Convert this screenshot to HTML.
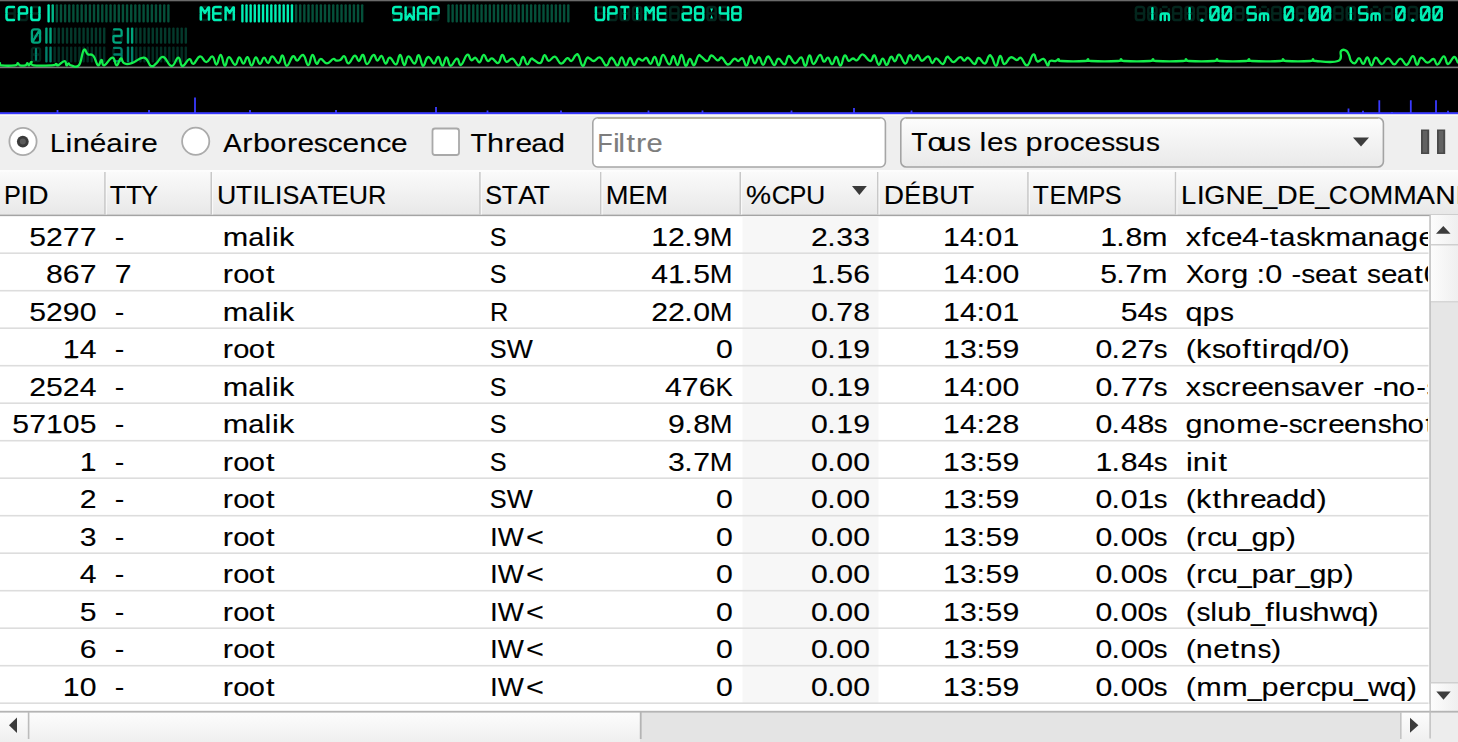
<!DOCTYPE html>
<html><head><meta charset="utf-8"><style>
html,body{margin:0;padding:0;}
body{width:1458px;height:742px;overflow:hidden;background:#efefef;position:relative;font-family:"Liberation Sans",sans-serif;}
svg{position:absolute;left:0;top:0;}
text{font-family:"Liberation Sans",sans-serif;}
</style></head><body>
<svg width="1458" height="742" viewBox="0 0 1458 742">
<rect x="0" y="114" width="1458" height="57" fill="#efefef"/><rect x="0" y="114" width="1458" height="2" fill="#fbfaf2"/><circle cx="23" cy="141.5" r="13.6" fill="#fff" stroke="#ababab" stroke-width="1.8"/><circle cx="22.8" cy="141.6" r="5.9" fill="#3a3a3a"/><circle cx="22.8" cy="141.6" r="3" fill="#5a5a5a"/><g font-size="26.60" fill="#000" stroke="#000" stroke-width="0.12"><text transform="scale(1.016,1)" x="49.3" y="152.0">L</text><text transform="scale(1.150,1)" x="56.9" y="152.0">i</text><text transform="scale(1.150,1)" x="63.2" y="152.0">n</text><text transform="scale(1.122,1)" x="79.9" y="152.0">é</text><text transform="scale(1.118,1)" x="95.1" y="152.0">a</text><text transform="scale(1.150,1)" x="107.1" y="152.0">i</text><text transform="scale(1.150,1)" x="113.8" y="152.0">r</text><text transform="scale(1.122,1)" x="126.0" y="152.0">e</text></g>
<circle cx="195.7" cy="141.3" r="13.6" fill="#fff" stroke="#ababab" stroke-width="1.8"/><g font-size="26.60" fill="#000" stroke="#000" stroke-width="0.12"><text transform="scale(1.041,1)" x="214.5" y="152.0">A</text><text transform="scale(1.150,1)" x="210.6" y="152.0">r</text><text transform="scale(1.150,1)" x="220.0" y="152.0">b</text><text transform="scale(1.117,1)" x="241.7" y="152.0">o</text><text transform="scale(1.150,1)" x="249.6" y="152.0">r</text><text transform="scale(1.123,1)" x="264.9" y="152.0">e</text><text transform="scale(1.058,1)" x="296.5" y="152.0">s</text><text transform="scale(1.117,1)" x="293.5" y="152.0">c</text><text transform="scale(1.123,1)" x="305.0" y="152.0">e</text><text transform="scale(1.150,1)" x="312.4" y="152.0">n</text><text transform="scale(1.117,1)" x="337.1" y="152.0">c</text><text transform="scale(1.123,1)" x="348.2" y="152.0">e</text></g>
<rect x="432.5" y="128.5" width="26.5" height="26.5" rx="2.5" fill="#fff" stroke="#a9a9a9" stroke-width="1.8"/><g font-size="26.60" fill="#000" stroke="#000" stroke-width="0.12"><text transform="scale(1.016,1)" x="463.0" y="152.0">T</text><text transform="scale(1.150,1)" x="423.5" y="152.0">h</text><text transform="scale(1.150,1)" x="438.8" y="152.0">r</text><text transform="scale(1.125,1)" x="458.2" y="152.0">e</text><text transform="scale(1.120,1)" x="474.4" y="152.0">a</text><text transform="scale(1.150,1)" x="476.5" y="152.0">d</text></g>
<rect x="592.8" y="117.8" width="292.6" height="49.2" rx="5" fill="#fff" stroke="#a6a6a6" stroke-width="1.6"/><path d="M597.8 118.2 H880.4" stroke="#b9b39e" stroke-width="1.4"/><g font-size="26.60" fill="#7d7d7d" stroke="#7d7d7d" stroke-width="0.12"><text transform="scale(0.950,1)" x="628.8" y="152.0">F</text><text transform="scale(1.150,1)" x="533.0" y="152.0">i</text><text transform="scale(1.150,1)" x="537.7" y="152.0">l</text><text transform="scale(1.150,1)" x="544.7" y="152.0">t</text><text transform="scale(1.150,1)" x="553.1" y="152.0">r</text><text transform="scale(1.098,1)" x="588.8" y="152.0">e</text></g>
<defs><linearGradient id="cg" x1="0" y1="0" x2="0" y2="1"><stop offset="0" stop-color="#fdfdfd"/><stop offset="1" stop-color="#e9e9e9"/></linearGradient></defs><rect x="900.8" y="117.8" width="482.6" height="49.2" rx="5.5" fill="url(#cg)" stroke="#a3a3a3" stroke-width="1.6"/><path d="M906 118.2 H1378" stroke="#b9b39e" stroke-width="1.4"/><g font-size="26.60" fill="#000" stroke="#000" stroke-width="0.12"><text transform="scale(1.007,1)" x="904.8" y="151.5">T</text><text transform="scale(1.108,1)" x="837.1" y="151.5">o</text><text transform="scale(1.148,1)" x="818.5" y="151.5">u</text><text transform="scale(1.050,1)" x="911.5" y="151.5">s</text><text transform="scale(1.150,1)" x="851.7" y="151.5">l</text><text transform="scale(1.115,1)" x="885.1" y="151.5">e</text><text transform="scale(1.050,1)" x="955.7" y="151.5">s</text><text transform="scale(1.150,1)" x="891.8" y="151.5">p</text><text transform="scale(1.150,1)" x="907.0" y="151.5">r</text><text transform="scale(1.108,1)" x="950.5" y="151.5">o</text><text transform="scale(1.108,1)" x="965.4" y="151.5">c</text><text transform="scale(1.115,1)" x="972.6" y="151.5">e</text><text transform="scale(1.050,1)" x="1048.7" y="151.5">s</text><text transform="scale(1.050,1)" x="1062.0" y="151.5">s</text><text transform="scale(1.148,1)" x="983.0" y="151.5">u</text><text transform="scale(1.050,1)" x="1091.4" y="151.5">s</text></g>
<path d="M1353 137.6 L1369 137.6 L1361 146.5 Z" fill="#3c3c3c"/><rect x="1421" y="129.5" width="8.2" height="24.5" fill="#4a4a4a"/><rect x="1422.8" y="131" width="4.5" height="21.5" fill="#626262"/><rect x="1437" y="129.5" width="8.2" height="24.5" fill="#4a4a4a"/><rect x="1438.8" y="131" width="4.5" height="21.5" fill="#626262"/><defs><linearGradient id="hg" x1="0" y1="0" x2="0" y2="1"><stop offset="0" stop-color="#fbfbfb"/><stop offset="1" stop-color="#e8e8e8"/></linearGradient></defs><rect x="0" y="170.5" width="1458" height="44" fill="url(#hg)"/><rect x="0" y="170" width="1458" height="1.6" fill="#fdfdfd"/><rect x="0" y="214.6" width="1458" height="2" fill="#a4a4a4"/><rect x="104.2" y="172" width="1.6" height="42.5" fill="#c8c8c8"/><rect x="105.8" y="172" width="1" height="42.5" fill="#fbfbfb"/><rect x="210.5" y="172" width="1.6" height="42.5" fill="#c8c8c8"/><rect x="212.1" y="172" width="1" height="42.5" fill="#fbfbfb"/><rect x="479.2" y="172" width="1.6" height="42.5" fill="#c8c8c8"/><rect x="480.8" y="172" width="1" height="42.5" fill="#fbfbfb"/><rect x="600.0" y="172" width="1.6" height="42.5" fill="#c8c8c8"/><rect x="601.6" y="172" width="1" height="42.5" fill="#fbfbfb"/><rect x="739.5" y="172" width="1.6" height="42.5" fill="#c8c8c8"/><rect x="741.1" y="172" width="1" height="42.5" fill="#fbfbfb"/><rect x="877.0" y="172" width="1.6" height="42.5" fill="#c8c8c8"/><rect x="878.6" y="172" width="1" height="42.5" fill="#fbfbfb"/><rect x="1027.2" y="172" width="1.6" height="42.5" fill="#c8c8c8"/><rect x="1028.8" y="172" width="1" height="42.5" fill="#fbfbfb"/><rect x="1174.8" y="172" width="1.6" height="42.5" fill="#c8c8c8"/><rect x="1176.4" y="172" width="1" height="42.5" fill="#fbfbfb"/><g font-size="26.60" fill="#000" stroke="#000" stroke-width="0.12"><text transform="scale(0.950,1)" x="4.2" y="203.8">P</text><text transform="scale(1.054,1)" x="19.4" y="203.8">I</text><text transform="scale(1.058,1)" x="26.7" y="203.8">D</text></g>
<g font-size="26.60" fill="#000" stroke="#000" stroke-width="0.12"><text transform="scale(0.992,1)" x="110.6" y="203.8">T</text><text transform="scale(0.992,1)" x="126.9" y="203.8">T</text><text transform="scale(0.950,1)" x="148.7" y="203.8">Y</text></g>
<g font-size="26.60" fill="#000" stroke="#000" stroke-width="0.12"><text transform="scale(1.006,1)" x="215.6" y="203.8">U</text><text transform="scale(0.992,1)" x="237.9" y="203.8">T</text><text transform="scale(1.054,1)" x="239.3" y="203.8">I</text><text transform="scale(0.994,1)" x="261.5" y="203.8">L</text><text transform="scale(1.054,1)" x="260.7" y="203.8">I</text><text transform="scale(0.950,1)" x="297.4" y="203.8">S</text><text transform="scale(1.018,1)" x="294.1" y="203.8">A</text><text transform="scale(0.992,1)" x="320.2" y="203.8">T</text><text transform="scale(0.950,1)" x="349.3" y="203.8">E</text><text transform="scale(1.006,1)" x="346.6" y="203.8">U</text><text transform="scale(0.955,1)" x="385.3" y="203.8">R</text></g>
<g font-size="26.60" fill="#000" stroke="#000" stroke-width="0.12"><text transform="scale(0.950,1)" x="510.7" y="203.8">S</text><text transform="scale(0.992,1)" x="505.8" y="203.8">T</text><text transform="scale(1.018,1)" x="509.0" y="203.8">A</text><text transform="scale(0.992,1)" x="538.1" y="203.8">T</text></g>
<g font-size="26.60" fill="#000" stroke="#000" stroke-width="0.12"><text transform="scale(1.028,1)" x="589.2" y="203.8">M</text><text transform="scale(0.950,1)" x="661.5" y="203.8">E</text><text transform="scale(1.028,1)" x="627.6" y="203.8">M</text></g>
<g font-size="26.60" fill="#000" stroke="#000" stroke-width="0.12"><text transform="scale(1.060,1)" x="703.9" y="203.8">%</text><text transform="scale(0.960,1)" x="804.0" y="203.8">C</text><text transform="scale(0.950,1)" x="831.1" y="203.8">P</text><text transform="scale(1.006,1)" x="801.3" y="203.8">U</text></g>
<g font-size="26.60" fill="#000" stroke="#000" stroke-width="0.12"><text transform="scale(1.058,1)" x="835.4" y="203.8">D</text><text transform="scale(0.950,1)" x="951.8" y="203.8">É</text><text transform="scale(1.021,1)" x="902.2" y="203.8">B</text><text transform="scale(1.006,1)" x="933.7" y="203.8">U</text><text transform="scale(0.992,1)" x="965.7" y="203.8">T</text></g>
<g font-size="26.60" fill="#000" stroke="#000" stroke-width="0.12"><text transform="scale(0.992,1)" x="1041.2" y="203.8">T</text><text transform="scale(0.950,1)" x="1104.7" y="203.8">E</text><text transform="scale(1.028,1)" x="1037.1" y="203.8">M</text><text transform="scale(0.950,1)" x="1145.8" y="203.8">P</text><text transform="scale(0.950,1)" x="1163.0" y="203.8">S</text></g>
<g font-size="26.60" fill="#000" stroke="#000" stroke-width="0.12"><text transform="scale(1.029,1)" x="1147.7" y="203.8">L</text><text transform="scale(1.091,1)" x="1097.0" y="203.8">I</text><text transform="scale(1.023,1)" x="1177.2" y="203.8">G</text><text transform="scale(1.064,1)" x="1151.9" y="203.8">N</text><text transform="scale(0.973,1)" x="1280.7" y="203.8">E</text><text transform="scale(0.950,1)" x="1329.8" y="203.8">_</text><text transform="scale(1.095,1)" x="1166.1" y="203.8">D</text><text transform="scale(0.973,1)" x="1334.1" y="203.8">E</text><text transform="scale(0.950,1)" x="1384.5" y="203.8">_</text><text transform="scale(0.993,1)" x="1338.2" y="203.8">C</text><text transform="scale(1.040,1)" x="1296.8" y="203.8">O</text><text transform="scale(1.064,1)" x="1287.3" y="203.8">M</text><text transform="scale(1.064,1)" x="1309.4" y="203.8">M</text><text transform="scale(1.053,1)" x="1345.0" y="203.8">A</text><text transform="scale(1.064,1)" x="1349.0" y="203.8">N</text><text transform="scale(1.095,1)" x="1329.4" y="203.8">D</text><text transform="scale(0.973,1)" x="1517.9" y="203.8">E</text></g>
<path d="M852 186 L866.8 186 L859.4 195 Z" fill="#3a3a3a"/><rect x="0" y="216.2" width="1430" height="495" fill="#fff"/><rect x="742.5" y="216.2" width="136" height="487.5" fill="#f7f7f7"/><defs><clipPath id="cc"><rect x="0" y="200" width="1428" height="520"/></clipPath></defs><rect x="0" y="252.4" width="1428.5" height="1.6" fill="#dddddd"/><g font-size="26.60" fill="#000" stroke="#000" stroke-width="0.12"><text transform="scale(1.136,1)" x="25.7" y="245.8">5</text><text transform="scale(1.136,1)" x="40.5" y="245.8">2</text><text transform="scale(1.136,1)" x="55.3" y="245.8">7</text><text transform="scale(1.136,1)" x="70.1" y="245.8">7</text></g>
<g font-size="26.60" fill="#000" stroke="#000" stroke-width="0.12"><text transform="scale(1.075,1)" x="106.8" y="245.8">-</text></g>
<g font-size="26.60" fill="#000" stroke="#000" stroke-width="0.12"><text transform="scale(1.150,1)" x="193.6" y="245.8">m</text><text transform="scale(1.094,1)" x="226.9" y="245.8">a</text><text transform="scale(1.150,1)" x="230.1" y="245.8">l</text><text transform="scale(1.150,1)" x="236.5" y="245.8">i</text><text transform="scale(1.149,1)" x="242.8" y="245.8">k</text></g>
<g font-size="26.60" fill="#000" stroke="#000" stroke-width="0.12"><text transform="scale(0.950,1)" x="515.6" y="245.8">S</text></g>
<g font-size="26.60" fill="#000" stroke="#000" stroke-width="0.12"><text transform="scale(1.136,1)" x="573.2" y="245.8">1</text><rect x="654.4" y="243.6" width="10.6" height="2.2" stroke="none"/><text transform="scale(1.136,1)" x="588.0" y="245.8">2</text><text transform="scale(1.135,1)" x="602.9" y="245.8">.</text><text transform="scale(1.136,1)" x="610.2" y="245.8">9</text><text transform="scale(1.028,1)" x="690.4" y="245.8">M</text></g>
<g font-size="26.60" fill="#000" stroke="#000" stroke-width="0.12"><text transform="scale(1.136,1)" x="714.0" y="245.8">2</text><text transform="scale(1.135,1)" x="728.9" y="245.8">.</text><text transform="scale(1.136,1)" x="736.2" y="245.8">3</text><text transform="scale(1.136,1)" x="751.0" y="245.8">3</text></g>
<g font-size="26.60" fill="#000" stroke="#000" stroke-width="0.12"><text transform="scale(1.136,1)" x="830.2" y="245.8">1</text><rect x="946.2" y="243.6" width="10.6" height="2.2" stroke="none"/><text transform="scale(1.136,1)" x="845.0" y="245.8">4</text><text transform="scale(1.150,1)" x="849.1" y="245.8">:</text><text transform="scale(1.136,1)" x="867.6" y="245.8">0</text><text transform="scale(1.136,1)" x="882.4" y="245.8">1</text><rect x="1005.5" y="243.6" width="10.6" height="2.2" stroke="none"/></g>
<g font-size="26.60" fill="#000" stroke="#000" stroke-width="0.12"><text transform="scale(1.136,1)" x="968.6" y="245.8">1</text><rect x="1103.4" y="243.6" width="10.6" height="2.2" stroke="none"/><text transform="scale(1.135,1)" x="983.5" y="245.8">.</text><text transform="scale(1.136,1)" x="990.8" y="245.8">8</text><text transform="scale(1.150,1)" x="993.0" y="245.8">m</text></g>
<g font-size="26.60" fill="#000" stroke="#000" stroke-width="0.12" clip-path="url(#cc)"><text transform="scale(1.150,1)" x="1031.1" y="245.8">x</text><text transform="scale(1.150,1)" x="1045.1" y="245.8">f</text><text transform="scale(1.108,1)" x="1093.0" y="245.8">c</text><text transform="scale(1.115,1)" x="1099.5" y="245.8">e</text><text transform="scale(1.150,1)" x="1080.0" y="245.8">4</text><text transform="scale(1.092,1)" x="1153.5" y="245.8">-</text><text transform="scale(1.150,1)" x="1104.1" y="245.8">t</text><text transform="scale(1.110,1)" x="1152.3" y="245.8">a</text><text transform="scale(1.050,1)" x="1234.5" y="245.8">s</text><text transform="scale(1.150,1)" x="1138.9" y="245.8">k</text><text transform="scale(1.150,1)" x="1152.6" y="245.8">m</text><text transform="scale(1.110,1)" x="1217.2" y="245.8">a</text><text transform="scale(1.148,1)" x="1191.3" y="245.8">n</text><text transform="scale(1.110,1)" x="1247.3" y="245.8">a</text><text transform="scale(1.150,1)" x="1218.3" y="245.8">g</text><text transform="scale(1.115,1)" x="1272.2" y="245.8">e</text><text transform="scale(1.150,1)" x="1247.8" y="245.8">r</text></g>
<rect x="0" y="289.9" width="1428.5" height="1.6" fill="#dddddd"/><g font-size="26.60" fill="#000" stroke="#000" stroke-width="0.12"><text transform="scale(1.136,1)" x="40.5" y="283.3">8</text><text transform="scale(1.136,1)" x="55.3" y="283.3">6</text><text transform="scale(1.136,1)" x="70.1" y="283.3">7</text></g>
<g font-size="26.60" fill="#000" stroke="#000" stroke-width="0.12"><text transform="scale(1.136,1)" x="101.1" y="283.3">7</text></g>
<g font-size="26.60" fill="#000" stroke="#000" stroke-width="0.12"><text transform="scale(1.150,1)" x="193.8" y="283.3">r</text><text transform="scale(1.092,1)" x="213.7" y="283.3">o</text><text transform="scale(1.092,1)" x="227.9" y="283.3">o</text><text transform="scale(1.150,1)" x="231.3" y="283.3">t</text></g>
<g font-size="26.60" fill="#000" stroke="#000" stroke-width="0.12"><text transform="scale(0.950,1)" x="515.6" y="283.3">S</text></g>
<g font-size="26.60" fill="#000" stroke="#000" stroke-width="0.12"><text transform="scale(1.136,1)" x="573.2" y="283.3">4</text><text transform="scale(1.136,1)" x="588.0" y="283.3">1</text><rect x="671.2" y="281.1" width="10.6" height="2.2" stroke="none"/><text transform="scale(1.135,1)" x="602.9" y="283.3">.</text><text transform="scale(1.136,1)" x="610.2" y="283.3">5</text><text transform="scale(1.028,1)" x="690.4" y="283.3">M</text></g>
<g font-size="26.60" fill="#000" stroke="#000" stroke-width="0.12"><text transform="scale(1.136,1)" x="714.0" y="283.3">1</text><rect x="814.3" y="281.1" width="10.6" height="2.2" stroke="none"/><text transform="scale(1.135,1)" x="728.9" y="283.3">.</text><text transform="scale(1.136,1)" x="736.2" y="283.3">5</text><text transform="scale(1.136,1)" x="751.0" y="283.3">6</text></g>
<g font-size="26.60" fill="#000" stroke="#000" stroke-width="0.12"><text transform="scale(1.136,1)" x="830.2" y="283.3">1</text><rect x="946.2" y="281.1" width="10.6" height="2.2" stroke="none"/><text transform="scale(1.136,1)" x="845.0" y="283.3">4</text><text transform="scale(1.150,1)" x="849.1" y="283.3">:</text><text transform="scale(1.136,1)" x="867.6" y="283.3">0</text><text transform="scale(1.136,1)" x="882.4" y="283.3">0</text></g>
<g font-size="26.60" fill="#000" stroke="#000" stroke-width="0.12"><text transform="scale(1.136,1)" x="968.6" y="283.3">5</text><text transform="scale(1.135,1)" x="983.5" y="283.3">.</text><text transform="scale(1.136,1)" x="990.8" y="283.3">7</text><text transform="scale(1.150,1)" x="993.0" y="283.3">m</text></g>
<g font-size="26.60" fill="#000" stroke="#000" stroke-width="0.12" clip-path="url(#cc)"><text transform="scale(1.035,1)" x="1146.0" y="283.3">X</text><text transform="scale(1.108,1)" x="1086.1" y="283.3">o</text><text transform="scale(1.150,1)" x="1061.4" y="283.3">r</text><text transform="scale(1.150,1)" x="1070.7" y="283.3">g</text><text transform="scale(1.150,1)" x="1092.7" y="283.3">:</text><text transform="scale(1.150,1)" x="1100.3" y="283.3">0</text><text transform="scale(1.092,1)" x="1182.7" y="283.3">-</text><text transform="scale(1.050,1)" x="1239.2" y="283.3">s</text><text transform="scale(1.115,1)" x="1179.3" y="283.3">e</text><text transform="scale(1.110,1)" x="1199.0" y="283.3">a</text><text transform="scale(1.150,1)" x="1172.6" y="283.3">t</text><text transform="scale(1.050,1)" x="1302.0" y="283.3">s</text><text transform="scale(1.115,1)" x="1238.5" y="283.3">e</text><text transform="scale(1.110,1)" x="1258.4" y="283.3">a</text><text transform="scale(1.150,1)" x="1229.9" y="283.3">t</text><text transform="scale(1.150,1)" x="1238.1" y="283.3">0</text><text transform="scale(1.092,1)" x="1327.9" y="283.3">-</text><text transform="scale(1.110,1)" x="1314.3" y="283.3">a</text><text transform="scale(1.148,1)" x="1285.2" y="283.3">u</text><text transform="scale(1.150,1)" x="1298.7" y="283.3">t</text><text transform="scale(1.148,1)" x="1309.2" y="283.3">h</text></g>
<rect x="0" y="327.4" width="1428.5" height="1.6" fill="#dddddd"/><g font-size="26.60" fill="#000" stroke="#000" stroke-width="0.12"><text transform="scale(1.136,1)" x="25.7" y="320.8">5</text><text transform="scale(1.136,1)" x="40.5" y="320.8">2</text><text transform="scale(1.136,1)" x="55.3" y="320.8">9</text><text transform="scale(1.136,1)" x="70.1" y="320.8">0</text></g>
<g font-size="26.60" fill="#000" stroke="#000" stroke-width="0.12"><text transform="scale(1.075,1)" x="106.8" y="320.8">-</text></g>
<g font-size="26.60" fill="#000" stroke="#000" stroke-width="0.12"><text transform="scale(1.150,1)" x="193.6" y="320.8">m</text><text transform="scale(1.094,1)" x="226.9" y="320.8">a</text><text transform="scale(1.150,1)" x="230.1" y="320.8">l</text><text transform="scale(1.150,1)" x="236.5" y="320.8">i</text><text transform="scale(1.149,1)" x="242.8" y="320.8">k</text></g>
<g font-size="26.60" fill="#000" stroke="#000" stroke-width="0.12"><text transform="scale(0.955,1)" x="513.0" y="320.8">R</text></g>
<g font-size="26.60" fill="#000" stroke="#000" stroke-width="0.12"><text transform="scale(1.136,1)" x="573.2" y="320.8">2</text><text transform="scale(1.136,1)" x="588.0" y="320.8">2</text><text transform="scale(1.135,1)" x="602.9" y="320.8">.</text><text transform="scale(1.136,1)" x="610.2" y="320.8">0</text><text transform="scale(1.028,1)" x="690.4" y="320.8">M</text></g>
<g font-size="26.60" fill="#000" stroke="#000" stroke-width="0.12"><text transform="scale(1.136,1)" x="714.0" y="320.8">0</text><text transform="scale(1.135,1)" x="728.9" y="320.8">.</text><text transform="scale(1.136,1)" x="736.2" y="320.8">7</text><text transform="scale(1.136,1)" x="751.0" y="320.8">8</text></g>
<g font-size="26.60" fill="#000" stroke="#000" stroke-width="0.12"><text transform="scale(1.136,1)" x="830.2" y="320.8">1</text><rect x="946.2" y="318.6" width="10.6" height="2.2" stroke="none"/><text transform="scale(1.136,1)" x="845.0" y="320.8">4</text><text transform="scale(1.150,1)" x="849.1" y="320.8">:</text><text transform="scale(1.136,1)" x="867.6" y="320.8">0</text><text transform="scale(1.136,1)" x="882.4" y="320.8">1</text><rect x="1005.5" y="318.6" width="10.6" height="2.2" stroke="none"/></g>
<g font-size="26.60" fill="#000" stroke="#000" stroke-width="0.12"><text transform="scale(1.136,1)" x="986.5" y="320.8">5</text><text transform="scale(1.136,1)" x="1001.3" y="320.8">4</text><text transform="scale(1.034,1)" x="1115.9" y="320.8">s</text></g>
<g font-size="26.60" fill="#000" stroke="#000" stroke-width="0.12" clip-path="url(#cc)"><text transform="scale(1.150,1)" x="1030.9" y="320.8">q</text><text transform="scale(1.150,1)" x="1045.7" y="320.8">p</text><text transform="scale(1.050,1)" x="1161.9" y="320.8">s</text></g>
<rect x="0" y="364.9" width="1428.5" height="1.6" fill="#dddddd"/><g font-size="26.60" fill="#000" stroke="#000" stroke-width="0.12"><text transform="scale(1.136,1)" x="55.3" y="358.3">1</text><rect x="66.3" y="356.1" width="10.6" height="2.2" stroke="none"/><text transform="scale(1.136,1)" x="70.1" y="358.3">4</text></g>
<g font-size="26.60" fill="#000" stroke="#000" stroke-width="0.12"><text transform="scale(1.075,1)" x="106.8" y="358.3">-</text></g>
<g font-size="26.60" fill="#000" stroke="#000" stroke-width="0.12"><text transform="scale(1.150,1)" x="193.8" y="358.3">r</text><text transform="scale(1.092,1)" x="213.7" y="358.3">o</text><text transform="scale(1.092,1)" x="227.9" y="358.3">o</text><text transform="scale(1.150,1)" x="231.3" y="358.3">t</text></g>
<g font-size="26.60" fill="#000" stroke="#000" stroke-width="0.12"><text transform="scale(0.950,1)" x="515.6" y="358.3">S</text><text transform="scale(1.040,1)" x="487.3" y="358.3">W</text></g>
<g font-size="26.60" fill="#000" stroke="#000" stroke-width="0.12"><text transform="scale(1.136,1)" x="630.3" y="358.3">0</text></g>
<g font-size="26.60" fill="#000" stroke="#000" stroke-width="0.12"><text transform="scale(1.136,1)" x="714.0" y="358.3">0</text><text transform="scale(1.135,1)" x="728.9" y="358.3">.</text><text transform="scale(1.136,1)" x="736.2" y="358.3">1</text><rect x="839.5" y="356.1" width="10.6" height="2.2" stroke="none"/><text transform="scale(1.136,1)" x="751.0" y="358.3">9</text></g>
<g font-size="26.60" fill="#000" stroke="#000" stroke-width="0.12"><text transform="scale(1.136,1)" x="830.2" y="358.3">1</text><rect x="946.2" y="356.1" width="10.6" height="2.2" stroke="none"/><text transform="scale(1.136,1)" x="845.0" y="358.3">3</text><text transform="scale(1.150,1)" x="849.1" y="358.3">:</text><text transform="scale(1.136,1)" x="867.6" y="358.3">5</text><text transform="scale(1.136,1)" x="882.4" y="358.3">9</text></g>
<g font-size="26.60" fill="#000" stroke="#000" stroke-width="0.12"><text transform="scale(1.136,1)" x="964.4" y="358.3">0</text><text transform="scale(1.135,1)" x="979.3" y="358.3">.</text><text transform="scale(1.136,1)" x="986.5" y="358.3">2</text><text transform="scale(1.136,1)" x="1001.3" y="358.3">7</text><text transform="scale(1.034,1)" x="1115.9" y="358.3">s</text></g>
<g font-size="26.60" fill="#000" stroke="#000" stroke-width="0.12" clip-path="url(#cc)"><text transform="scale(1.150,1)" x="1031.0" y="358.3">(</text><text transform="scale(1.150,1)" x="1040.1" y="358.3">k</text><text transform="scale(1.050,1)" x="1154.3" y="358.3">s</text><text transform="scale(1.108,1)" x="1105.6" y="358.3">o</text><text transform="scale(1.150,1)" x="1080.3" y="358.3">f</text><text transform="scale(1.150,1)" x="1088.9" y="358.3">t</text><text transform="scale(1.150,1)" x="1097.1" y="358.3">i</text><text transform="scale(1.150,1)" x="1103.6" y="358.3">r</text><text transform="scale(1.150,1)" x="1112.8" y="358.3">q</text><text transform="scale(1.150,1)" x="1127.2" y="358.3">d</text><text transform="scale(1.150,1)" x="1142.2" y="358.3">/</text><text transform="scale(1.150,1)" x="1149.9" y="358.3">0</text><text transform="scale(1.150,1)" x="1164.8" y="358.3">)</text></g>
<rect x="0" y="402.4" width="1428.5" height="1.6" fill="#dddddd"/><g font-size="26.60" fill="#000" stroke="#000" stroke-width="0.12"><text transform="scale(1.136,1)" x="25.7" y="395.8">2</text><text transform="scale(1.136,1)" x="40.5" y="395.8">5</text><text transform="scale(1.136,1)" x="55.3" y="395.8">2</text><text transform="scale(1.136,1)" x="70.1" y="395.8">4</text></g>
<g font-size="26.60" fill="#000" stroke="#000" stroke-width="0.12"><text transform="scale(1.075,1)" x="106.8" y="395.8">-</text></g>
<g font-size="26.60" fill="#000" stroke="#000" stroke-width="0.12"><text transform="scale(1.150,1)" x="193.6" y="395.8">m</text><text transform="scale(1.094,1)" x="226.9" y="395.8">a</text><text transform="scale(1.150,1)" x="230.1" y="395.8">l</text><text transform="scale(1.150,1)" x="236.5" y="395.8">i</text><text transform="scale(1.149,1)" x="242.8" y="395.8">k</text></g>
<g font-size="26.60" fill="#000" stroke="#000" stroke-width="0.12"><text transform="scale(0.950,1)" x="515.6" y="395.8">S</text></g>
<g font-size="26.60" fill="#000" stroke="#000" stroke-width="0.12"><text transform="scale(1.136,1)" x="585.4" y="395.8">4</text><text transform="scale(1.136,1)" x="600.2" y="395.8">7</text><text transform="scale(1.136,1)" x="615.0" y="395.8">6</text><text transform="scale(0.976,1)" x="733.0" y="395.8">K</text></g>
<g font-size="26.60" fill="#000" stroke="#000" stroke-width="0.12"><text transform="scale(1.136,1)" x="714.0" y="395.8">0</text><text transform="scale(1.135,1)" x="728.9" y="395.8">.</text><text transform="scale(1.136,1)" x="736.2" y="395.8">1</text><rect x="839.5" y="393.6" width="10.6" height="2.2" stroke="none"/><text transform="scale(1.136,1)" x="751.0" y="395.8">9</text></g>
<g font-size="26.60" fill="#000" stroke="#000" stroke-width="0.12"><text transform="scale(1.136,1)" x="830.2" y="395.8">1</text><rect x="946.2" y="393.6" width="10.6" height="2.2" stroke="none"/><text transform="scale(1.136,1)" x="845.0" y="395.8">4</text><text transform="scale(1.150,1)" x="849.1" y="395.8">:</text><text transform="scale(1.136,1)" x="867.6" y="395.8">0</text><text transform="scale(1.136,1)" x="882.4" y="395.8">0</text></g>
<g font-size="26.60" fill="#000" stroke="#000" stroke-width="0.12"><text transform="scale(1.136,1)" x="964.4" y="395.8">0</text><text transform="scale(1.135,1)" x="979.3" y="395.8">.</text><text transform="scale(1.136,1)" x="986.5" y="395.8">7</text><text transform="scale(1.136,1)" x="1001.3" y="395.8">7</text><text transform="scale(1.034,1)" x="1115.9" y="395.8">s</text></g>
<g font-size="26.60" fill="#000" stroke="#000" stroke-width="0.12" clip-path="url(#cc)"><text transform="scale(1.150,1)" x="1031.1" y="395.8">x</text><text transform="scale(1.050,1)" x="1144.6" y="395.8">s</text><text transform="scale(1.108,1)" x="1097.1" y="395.8">c</text><text transform="scale(1.150,1)" x="1070.0" y="395.8">r</text><text transform="scale(1.115,1)" x="1113.4" y="395.8">e</text><text transform="scale(1.115,1)" x="1127.7" y="395.8">e</text><text transform="scale(1.148,1)" x="1109.2" y="395.8">n</text><text transform="scale(1.050,1)" x="1229.5" y="395.8">s</text><text transform="scale(1.110,1)" x="1175.0" y="395.8">a</text><text transform="scale(1.150,1)" x="1148.8" y="395.8">v</text><text transform="scale(1.115,1)" x="1199.2" y="395.8">e</text><text transform="scale(1.150,1)" x="1177.0" y="395.8">r</text><text transform="scale(1.092,1)" x="1257.6" y="395.8">-</text><text transform="scale(1.148,1)" x="1204.1" y="395.8">n</text><text transform="scale(1.108,1)" x="1262.5" y="395.8">o</text><text transform="scale(1.092,1)" x="1297.0" y="395.8">-</text><text transform="scale(1.050,1)" x="1358.6" y="395.8">s</text><text transform="scale(1.150,1)" x="1252.1" y="395.8">p</text><text transform="scale(1.150,1)" x="1267.1" y="395.8">l</text><text transform="scale(1.110,1)" x="1319.1" y="395.8">a</text><text transform="scale(1.050,1)" x="1410.8" y="395.8">s</text><text transform="scale(1.148,1)" x="1302.0" y="395.8">h</text></g>
<rect x="0" y="439.9" width="1428.5" height="1.6" fill="#dddddd"/><g font-size="26.60" fill="#000" stroke="#000" stroke-width="0.12"><text transform="scale(1.136,1)" x="10.9" y="433.3">5</text><text transform="scale(1.136,1)" x="25.7" y="433.3">7</text><text transform="scale(1.136,1)" x="40.5" y="433.3">1</text><rect x="49.5" y="431.1" width="10.6" height="2.2" stroke="none"/><text transform="scale(1.136,1)" x="55.3" y="433.3">0</text><text transform="scale(1.136,1)" x="70.1" y="433.3">5</text></g>
<g font-size="26.60" fill="#000" stroke="#000" stroke-width="0.12"><text transform="scale(1.075,1)" x="106.8" y="433.3">-</text></g>
<g font-size="26.60" fill="#000" stroke="#000" stroke-width="0.12"><text transform="scale(1.150,1)" x="193.6" y="433.3">m</text><text transform="scale(1.094,1)" x="226.9" y="433.3">a</text><text transform="scale(1.150,1)" x="230.1" y="433.3">l</text><text transform="scale(1.150,1)" x="236.5" y="433.3">i</text><text transform="scale(1.149,1)" x="242.8" y="433.3">k</text></g>
<g font-size="26.60" fill="#000" stroke="#000" stroke-width="0.12"><text transform="scale(0.950,1)" x="515.6" y="433.3">S</text></g>
<g font-size="26.60" fill="#000" stroke="#000" stroke-width="0.12"><text transform="scale(1.136,1)" x="588.0" y="433.3">9</text><text transform="scale(1.135,1)" x="602.9" y="433.3">.</text><text transform="scale(1.136,1)" x="610.2" y="433.3">8</text><text transform="scale(1.028,1)" x="690.4" y="433.3">M</text></g>
<g font-size="26.60" fill="#000" stroke="#000" stroke-width="0.12"><text transform="scale(1.136,1)" x="714.0" y="433.3">0</text><text transform="scale(1.135,1)" x="728.9" y="433.3">.</text><text transform="scale(1.136,1)" x="736.2" y="433.3">1</text><rect x="839.5" y="431.1" width="10.6" height="2.2" stroke="none"/><text transform="scale(1.136,1)" x="751.0" y="433.3">9</text></g>
<g font-size="26.60" fill="#000" stroke="#000" stroke-width="0.12"><text transform="scale(1.136,1)" x="830.2" y="433.3">1</text><rect x="946.2" y="431.1" width="10.6" height="2.2" stroke="none"/><text transform="scale(1.136,1)" x="845.0" y="433.3">4</text><text transform="scale(1.150,1)" x="849.1" y="433.3">:</text><text transform="scale(1.136,1)" x="867.6" y="433.3">2</text><text transform="scale(1.136,1)" x="882.4" y="433.3">8</text></g>
<g font-size="26.60" fill="#000" stroke="#000" stroke-width="0.12"><text transform="scale(1.136,1)" x="964.4" y="433.3">0</text><text transform="scale(1.135,1)" x="979.3" y="433.3">.</text><text transform="scale(1.136,1)" x="986.5" y="433.3">4</text><text transform="scale(1.136,1)" x="1001.3" y="433.3">8</text><text transform="scale(1.034,1)" x="1115.9" y="433.3">s</text></g>
<g font-size="26.60" fill="#000" stroke="#000" stroke-width="0.12" clip-path="url(#cc)"><text transform="scale(1.150,1)" x="1030.9" y="433.3">g</text><text transform="scale(1.148,1)" x="1047.4" y="433.3">n</text><text transform="scale(1.108,1)" x="1100.2" y="433.3">o</text><text transform="scale(1.150,1)" x="1075.0" y="433.3">m</text><text transform="scale(1.115,1)" x="1132.2" y="433.3">e</text><text transform="scale(1.092,1)" x="1171.3" y="433.3">-</text><text transform="scale(1.050,1)" x="1227.3" y="433.3">s</text><text transform="scale(1.108,1)" x="1175.4" y="433.3">c</text><text transform="scale(1.150,1)" x="1145.4" y="433.3">r</text><text transform="scale(1.115,1)" x="1191.3" y="433.3">e</text><text transform="scale(1.115,1)" x="1205.5" y="433.3">e</text><text transform="scale(1.148,1)" x="1184.8" y="433.3">n</text><text transform="scale(1.050,1)" x="1312.2" y="433.3">s</text><text transform="scale(1.148,1)" x="1211.8" y="433.3">h</text><text transform="scale(1.108,1)" x="1270.4" y="433.3">o</text><text transform="scale(1.150,1)" x="1239.6" y="433.3">t</text></g>
<rect x="0" y="477.4" width="1428.5" height="1.6" fill="#dddddd"/><g font-size="26.60" fill="#000" stroke="#000" stroke-width="0.12"><text transform="scale(1.136,1)" x="70.1" y="470.8">1</text><rect x="83.1" y="468.6" width="10.6" height="2.2" stroke="none"/></g>
<g font-size="26.60" fill="#000" stroke="#000" stroke-width="0.12"><text transform="scale(1.075,1)" x="106.8" y="470.8">-</text></g>
<g font-size="26.60" fill="#000" stroke="#000" stroke-width="0.12"><text transform="scale(1.150,1)" x="193.8" y="470.8">r</text><text transform="scale(1.092,1)" x="213.7" y="470.8">o</text><text transform="scale(1.092,1)" x="227.9" y="470.8">o</text><text transform="scale(1.150,1)" x="231.3" y="470.8">t</text></g>
<g font-size="26.60" fill="#000" stroke="#000" stroke-width="0.12"><text transform="scale(0.950,1)" x="515.6" y="470.8">S</text></g>
<g font-size="26.60" fill="#000" stroke="#000" stroke-width="0.12"><text transform="scale(1.136,1)" x="588.0" y="470.8">3</text><text transform="scale(1.135,1)" x="602.9" y="470.8">.</text><text transform="scale(1.136,1)" x="610.2" y="470.8">7</text><text transform="scale(1.028,1)" x="690.4" y="470.8">M</text></g>
<g font-size="26.60" fill="#000" stroke="#000" stroke-width="0.12"><text transform="scale(1.136,1)" x="714.0" y="470.8">0</text><text transform="scale(1.135,1)" x="728.9" y="470.8">.</text><text transform="scale(1.136,1)" x="736.2" y="470.8">0</text><text transform="scale(1.136,1)" x="751.0" y="470.8">0</text></g>
<g font-size="26.60" fill="#000" stroke="#000" stroke-width="0.12"><text transform="scale(1.136,1)" x="830.2" y="470.8">1</text><rect x="946.2" y="468.6" width="10.6" height="2.2" stroke="none"/><text transform="scale(1.136,1)" x="845.0" y="470.8">3</text><text transform="scale(1.150,1)" x="849.1" y="470.8">:</text><text transform="scale(1.136,1)" x="867.6" y="470.8">5</text><text transform="scale(1.136,1)" x="882.4" y="470.8">9</text></g>
<g font-size="26.60" fill="#000" stroke="#000" stroke-width="0.12"><text transform="scale(1.136,1)" x="964.4" y="470.8">1</text><rect x="1098.5" y="468.6" width="10.6" height="2.2" stroke="none"/><text transform="scale(1.135,1)" x="979.3" y="470.8">.</text><text transform="scale(1.136,1)" x="986.5" y="470.8">8</text><text transform="scale(1.136,1)" x="1001.3" y="470.8">4</text><text transform="scale(1.034,1)" x="1115.9" y="470.8">s</text></g>
<g font-size="26.60" fill="#000" stroke="#000" stroke-width="0.12" clip-path="url(#cc)"><text transform="scale(1.150,1)" x="1031.2" y="470.8">i</text><text transform="scale(1.148,1)" x="1039.1" y="470.8">n</text><text transform="scale(1.150,1)" x="1052.4" y="470.8">i</text><text transform="scale(1.150,1)" x="1059.5" y="470.8">t</text></g>
<rect x="0" y="514.9" width="1428.5" height="1.6" fill="#dddddd"/><g font-size="26.60" fill="#000" stroke="#000" stroke-width="0.12"><text transform="scale(1.136,1)" x="70.1" y="508.3">2</text></g>
<g font-size="26.60" fill="#000" stroke="#000" stroke-width="0.12"><text transform="scale(1.075,1)" x="106.8" y="508.3">-</text></g>
<g font-size="26.60" fill="#000" stroke="#000" stroke-width="0.12"><text transform="scale(1.150,1)" x="193.8" y="508.3">r</text><text transform="scale(1.092,1)" x="213.7" y="508.3">o</text><text transform="scale(1.092,1)" x="227.9" y="508.3">o</text><text transform="scale(1.150,1)" x="231.3" y="508.3">t</text></g>
<g font-size="26.60" fill="#000" stroke="#000" stroke-width="0.12"><text transform="scale(0.950,1)" x="515.6" y="508.3">S</text><text transform="scale(1.040,1)" x="487.3" y="508.3">W</text></g>
<g font-size="26.60" fill="#000" stroke="#000" stroke-width="0.12"><text transform="scale(1.136,1)" x="630.3" y="508.3">0</text></g>
<g font-size="26.60" fill="#000" stroke="#000" stroke-width="0.12"><text transform="scale(1.136,1)" x="714.0" y="508.3">0</text><text transform="scale(1.135,1)" x="728.9" y="508.3">.</text><text transform="scale(1.136,1)" x="736.2" y="508.3">0</text><text transform="scale(1.136,1)" x="751.0" y="508.3">0</text></g>
<g font-size="26.60" fill="#000" stroke="#000" stroke-width="0.12"><text transform="scale(1.136,1)" x="830.2" y="508.3">1</text><rect x="946.2" y="506.1" width="10.6" height="2.2" stroke="none"/><text transform="scale(1.136,1)" x="845.0" y="508.3">3</text><text transform="scale(1.150,1)" x="849.1" y="508.3">:</text><text transform="scale(1.136,1)" x="867.6" y="508.3">5</text><text transform="scale(1.136,1)" x="882.4" y="508.3">9</text></g>
<g font-size="26.60" fill="#000" stroke="#000" stroke-width="0.12"><text transform="scale(1.136,1)" x="964.4" y="508.3">0</text><text transform="scale(1.135,1)" x="979.3" y="508.3">.</text><text transform="scale(1.136,1)" x="986.5" y="508.3">0</text><text transform="scale(1.136,1)" x="1001.3" y="508.3">1</text><rect x="1140.5" y="506.1" width="10.6" height="2.2" stroke="none"/><text transform="scale(1.034,1)" x="1115.9" y="508.3">s</text></g>
<g font-size="26.60" fill="#000" stroke="#000" stroke-width="0.12" clip-path="url(#cc)"><text transform="scale(1.150,1)" x="1031.0" y="508.3">(</text><text transform="scale(1.150,1)" x="1040.1" y="508.3">k</text><text transform="scale(1.150,1)" x="1054.3" y="508.3">t</text><text transform="scale(1.148,1)" x="1064.4" y="508.3">h</text><text transform="scale(1.150,1)" x="1077.7" y="508.3">r</text><text transform="scale(1.115,1)" x="1121.4" y="508.3">e</text><text transform="scale(1.110,1)" x="1140.3" y="508.3">a</text><text transform="scale(1.150,1)" x="1115.0" y="508.3">d</text><text transform="scale(1.150,1)" x="1129.8" y="508.3">d</text><text transform="scale(1.150,1)" x="1144.7" y="508.3">)</text></g>
<rect x="0" y="552.4" width="1428.5" height="1.6" fill="#dddddd"/><g font-size="26.60" fill="#000" stroke="#000" stroke-width="0.12"><text transform="scale(1.136,1)" x="70.1" y="545.8">3</text></g>
<g font-size="26.60" fill="#000" stroke="#000" stroke-width="0.12"><text transform="scale(1.075,1)" x="106.8" y="545.8">-</text></g>
<g font-size="26.60" fill="#000" stroke="#000" stroke-width="0.12"><text transform="scale(1.150,1)" x="193.8" y="545.8">r</text><text transform="scale(1.092,1)" x="213.7" y="545.8">o</text><text transform="scale(1.092,1)" x="227.9" y="545.8">o</text><text transform="scale(1.150,1)" x="231.3" y="545.8">t</text></g>
<g font-size="26.60" fill="#000" stroke="#000" stroke-width="0.12"><text transform="scale(1.054,1)" x="464.9" y="545.8">I</text><text transform="scale(1.040,1)" x="478.7" y="545.8">W</text><text transform="scale(1.150,1)" x="457.3" y="545.8">&lt;</text></g>
<g font-size="26.60" fill="#000" stroke="#000" stroke-width="0.12"><text transform="scale(1.136,1)" x="630.3" y="545.8">0</text></g>
<g font-size="26.60" fill="#000" stroke="#000" stroke-width="0.12"><text transform="scale(1.136,1)" x="714.0" y="545.8">0</text><text transform="scale(1.135,1)" x="728.9" y="545.8">.</text><text transform="scale(1.136,1)" x="736.2" y="545.8">0</text><text transform="scale(1.136,1)" x="751.0" y="545.8">0</text></g>
<g font-size="26.60" fill="#000" stroke="#000" stroke-width="0.12"><text transform="scale(1.136,1)" x="830.2" y="545.8">1</text><rect x="946.2" y="543.6" width="10.6" height="2.2" stroke="none"/><text transform="scale(1.136,1)" x="845.0" y="545.8">3</text><text transform="scale(1.150,1)" x="849.1" y="545.8">:</text><text transform="scale(1.136,1)" x="867.6" y="545.8">5</text><text transform="scale(1.136,1)" x="882.4" y="545.8">9</text></g>
<g font-size="26.60" fill="#000" stroke="#000" stroke-width="0.12"><text transform="scale(1.136,1)" x="964.4" y="545.8">0</text><text transform="scale(1.135,1)" x="979.3" y="545.8">.</text><text transform="scale(1.136,1)" x="986.5" y="545.8">0</text><text transform="scale(1.136,1)" x="1001.3" y="545.8">0</text><text transform="scale(1.034,1)" x="1115.9" y="545.8">s</text></g>
<g font-size="26.60" fill="#000" stroke="#000" stroke-width="0.12" clip-path="url(#cc)"><text transform="scale(1.150,1)" x="1031.0" y="545.8">(</text><text transform="scale(1.150,1)" x="1040.3" y="545.8">r</text><text transform="scale(1.108,1)" x="1089.5" y="545.8">c</text><text transform="scale(1.148,1)" x="1063.6" y="545.8">u</text><text transform="scale(0.950,1)" x="1302.9" y="545.8">_</text><text transform="scale(1.150,1)" x="1088.3" y="545.8">g</text><text transform="scale(1.150,1)" x="1103.0" y="545.8">p</text><text transform="scale(1.150,1)" x="1118.0" y="545.8">)</text></g>
<rect x="0" y="589.9" width="1428.5" height="1.6" fill="#dddddd"/><g font-size="26.60" fill="#000" stroke="#000" stroke-width="0.12"><text transform="scale(1.136,1)" x="70.1" y="583.3">4</text></g>
<g font-size="26.60" fill="#000" stroke="#000" stroke-width="0.12"><text transform="scale(1.075,1)" x="106.8" y="583.3">-</text></g>
<g font-size="26.60" fill="#000" stroke="#000" stroke-width="0.12"><text transform="scale(1.150,1)" x="193.8" y="583.3">r</text><text transform="scale(1.092,1)" x="213.7" y="583.3">o</text><text transform="scale(1.092,1)" x="227.9" y="583.3">o</text><text transform="scale(1.150,1)" x="231.3" y="583.3">t</text></g>
<g font-size="26.60" fill="#000" stroke="#000" stroke-width="0.12"><text transform="scale(1.054,1)" x="464.9" y="583.3">I</text><text transform="scale(1.040,1)" x="478.7" y="583.3">W</text><text transform="scale(1.150,1)" x="457.3" y="583.3">&lt;</text></g>
<g font-size="26.60" fill="#000" stroke="#000" stroke-width="0.12"><text transform="scale(1.136,1)" x="630.3" y="583.3">0</text></g>
<g font-size="26.60" fill="#000" stroke="#000" stroke-width="0.12"><text transform="scale(1.136,1)" x="714.0" y="583.3">0</text><text transform="scale(1.135,1)" x="728.9" y="583.3">.</text><text transform="scale(1.136,1)" x="736.2" y="583.3">0</text><text transform="scale(1.136,1)" x="751.0" y="583.3">0</text></g>
<g font-size="26.60" fill="#000" stroke="#000" stroke-width="0.12"><text transform="scale(1.136,1)" x="830.2" y="583.3">1</text><rect x="946.2" y="581.1" width="10.6" height="2.2" stroke="none"/><text transform="scale(1.136,1)" x="845.0" y="583.3">3</text><text transform="scale(1.150,1)" x="849.1" y="583.3">:</text><text transform="scale(1.136,1)" x="867.6" y="583.3">5</text><text transform="scale(1.136,1)" x="882.4" y="583.3">9</text></g>
<g font-size="26.60" fill="#000" stroke="#000" stroke-width="0.12"><text transform="scale(1.136,1)" x="964.4" y="583.3">0</text><text transform="scale(1.135,1)" x="979.3" y="583.3">.</text><text transform="scale(1.136,1)" x="986.5" y="583.3">0</text><text transform="scale(1.136,1)" x="1001.3" y="583.3">0</text><text transform="scale(1.034,1)" x="1115.9" y="583.3">s</text></g>
<g font-size="26.60" fill="#000" stroke="#000" stroke-width="0.12" clip-path="url(#cc)"><text transform="scale(1.150,1)" x="1031.0" y="583.3">(</text><text transform="scale(1.150,1)" x="1040.3" y="583.3">r</text><text transform="scale(1.108,1)" x="1089.5" y="583.3">c</text><text transform="scale(1.148,1)" x="1063.6" y="583.3">u</text><text transform="scale(0.950,1)" x="1302.9" y="583.3">_</text><text transform="scale(1.150,1)" x="1088.3" y="583.3">p</text><text transform="scale(1.110,1)" x="1142.7" y="583.3">a</text><text transform="scale(1.150,1)" x="1117.7" y="583.3">r</text><text transform="scale(0.950,1)" x="1363.8" y="583.3">_</text><text transform="scale(1.150,1)" x="1138.6" y="583.3">g</text><text transform="scale(1.150,1)" x="1153.3" y="583.3">p</text><text transform="scale(1.150,1)" x="1168.3" y="583.3">)</text></g>
<rect x="0" y="627.4" width="1428.5" height="1.6" fill="#dddddd"/><g font-size="26.60" fill="#000" stroke="#000" stroke-width="0.12"><text transform="scale(1.136,1)" x="70.1" y="620.8">5</text></g>
<g font-size="26.60" fill="#000" stroke="#000" stroke-width="0.12"><text transform="scale(1.075,1)" x="106.8" y="620.8">-</text></g>
<g font-size="26.60" fill="#000" stroke="#000" stroke-width="0.12"><text transform="scale(1.150,1)" x="193.8" y="620.8">r</text><text transform="scale(1.092,1)" x="213.7" y="620.8">o</text><text transform="scale(1.092,1)" x="227.9" y="620.8">o</text><text transform="scale(1.150,1)" x="231.3" y="620.8">t</text></g>
<g font-size="26.60" fill="#000" stroke="#000" stroke-width="0.12"><text transform="scale(1.054,1)" x="464.9" y="620.8">I</text><text transform="scale(1.040,1)" x="478.7" y="620.8">W</text><text transform="scale(1.150,1)" x="457.3" y="620.8">&lt;</text></g>
<g font-size="26.60" fill="#000" stroke="#000" stroke-width="0.12"><text transform="scale(1.136,1)" x="630.3" y="620.8">0</text></g>
<g font-size="26.60" fill="#000" stroke="#000" stroke-width="0.12"><text transform="scale(1.136,1)" x="714.0" y="620.8">0</text><text transform="scale(1.135,1)" x="728.9" y="620.8">.</text><text transform="scale(1.136,1)" x="736.2" y="620.8">0</text><text transform="scale(1.136,1)" x="751.0" y="620.8">0</text></g>
<g font-size="26.60" fill="#000" stroke="#000" stroke-width="0.12"><text transform="scale(1.136,1)" x="830.2" y="620.8">1</text><rect x="946.2" y="618.6" width="10.6" height="2.2" stroke="none"/><text transform="scale(1.136,1)" x="845.0" y="620.8">3</text><text transform="scale(1.150,1)" x="849.1" y="620.8">:</text><text transform="scale(1.136,1)" x="867.6" y="620.8">5</text><text transform="scale(1.136,1)" x="882.4" y="620.8">9</text></g>
<g font-size="26.60" fill="#000" stroke="#000" stroke-width="0.12"><text transform="scale(1.136,1)" x="964.4" y="620.8">0</text><text transform="scale(1.135,1)" x="979.3" y="620.8">.</text><text transform="scale(1.136,1)" x="986.5" y="620.8">0</text><text transform="scale(1.136,1)" x="1001.3" y="620.8">0</text><text transform="scale(1.034,1)" x="1115.9" y="620.8">s</text></g>
<g font-size="26.60" fill="#000" stroke="#000" stroke-width="0.12" clip-path="url(#cc)"><text transform="scale(1.150,1)" x="1031.0" y="620.8">(</text><text transform="scale(1.050,1)" x="1139.5" y="620.8">s</text><text transform="scale(1.150,1)" x="1052.4" y="620.8">l</text><text transform="scale(1.148,1)" x="1060.4" y="620.8">u</text><text transform="scale(1.150,1)" x="1073.3" y="620.8">b</text><text transform="scale(0.950,1)" x="1316.9" y="620.8">_</text><text transform="scale(1.150,1)" x="1100.2" y="620.8">f</text><text transform="scale(1.150,1)" x="1108.3" y="620.8">l</text><text transform="scale(1.148,1)" x="1116.4" y="620.8">u</text><text transform="scale(1.050,1)" x="1237.3" y="620.8">s</text><text transform="scale(1.148,1)" x="1143.3" y="620.8">h</text><text transform="scale(1.141,1)" x="1165.5" y="620.8">w</text><text transform="scale(1.150,1)" x="1175.2" y="620.8">q</text><text transform="scale(1.150,1)" x="1190.1" y="620.8">)</text></g>
<rect x="0" y="664.9" width="1428.5" height="1.6" fill="#dddddd"/><g font-size="26.60" fill="#000" stroke="#000" stroke-width="0.12"><text transform="scale(1.136,1)" x="70.1" y="658.3">6</text></g>
<g font-size="26.60" fill="#000" stroke="#000" stroke-width="0.12"><text transform="scale(1.075,1)" x="106.8" y="658.3">-</text></g>
<g font-size="26.60" fill="#000" stroke="#000" stroke-width="0.12"><text transform="scale(1.150,1)" x="193.8" y="658.3">r</text><text transform="scale(1.092,1)" x="213.7" y="658.3">o</text><text transform="scale(1.092,1)" x="227.9" y="658.3">o</text><text transform="scale(1.150,1)" x="231.3" y="658.3">t</text></g>
<g font-size="26.60" fill="#000" stroke="#000" stroke-width="0.12"><text transform="scale(1.054,1)" x="464.9" y="658.3">I</text><text transform="scale(1.040,1)" x="478.7" y="658.3">W</text><text transform="scale(1.150,1)" x="457.3" y="658.3">&lt;</text></g>
<g font-size="26.60" fill="#000" stroke="#000" stroke-width="0.12"><text transform="scale(1.136,1)" x="630.3" y="658.3">0</text></g>
<g font-size="26.60" fill="#000" stroke="#000" stroke-width="0.12"><text transform="scale(1.136,1)" x="714.0" y="658.3">0</text><text transform="scale(1.135,1)" x="728.9" y="658.3">.</text><text transform="scale(1.136,1)" x="736.2" y="658.3">0</text><text transform="scale(1.136,1)" x="751.0" y="658.3">0</text></g>
<g font-size="26.60" fill="#000" stroke="#000" stroke-width="0.12"><text transform="scale(1.136,1)" x="830.2" y="658.3">1</text><rect x="946.2" y="656.1" width="10.6" height="2.2" stroke="none"/><text transform="scale(1.136,1)" x="845.0" y="658.3">3</text><text transform="scale(1.150,1)" x="849.1" y="658.3">:</text><text transform="scale(1.136,1)" x="867.6" y="658.3">5</text><text transform="scale(1.136,1)" x="882.4" y="658.3">9</text></g>
<g font-size="26.60" fill="#000" stroke="#000" stroke-width="0.12"><text transform="scale(1.136,1)" x="964.4" y="658.3">0</text><text transform="scale(1.135,1)" x="979.3" y="658.3">.</text><text transform="scale(1.136,1)" x="986.5" y="658.3">0</text><text transform="scale(1.136,1)" x="1001.3" y="658.3">0</text><text transform="scale(1.034,1)" x="1115.9" y="658.3">s</text></g>
<g font-size="26.60" fill="#000" stroke="#000" stroke-width="0.12" clip-path="url(#cc)"><text transform="scale(1.150,1)" x="1031.0" y="658.3">(</text><text transform="scale(1.148,1)" x="1041.7" y="658.3">n</text><text transform="scale(1.115,1)" x="1088.2" y="658.3">e</text><text transform="scale(1.150,1)" x="1069.9" y="658.3">t</text><text transform="scale(1.148,1)" x="1080.0" y="658.3">n</text><text transform="scale(1.050,1)" x="1197.6" y="658.3">s</text><text transform="scale(1.150,1)" x="1105.2" y="658.3">)</text></g>
<rect x="0" y="702.4" width="1428.5" height="1.6" fill="#dddddd"/><g font-size="26.60" fill="#000" stroke="#000" stroke-width="0.12"><text transform="scale(1.136,1)" x="55.3" y="695.8">1</text><rect x="66.3" y="693.6" width="10.6" height="2.2" stroke="none"/><text transform="scale(1.136,1)" x="70.1" y="695.8">0</text></g>
<g font-size="26.60" fill="#000" stroke="#000" stroke-width="0.12"><text transform="scale(1.075,1)" x="106.8" y="695.8">-</text></g>
<g font-size="26.60" fill="#000" stroke="#000" stroke-width="0.12"><text transform="scale(1.150,1)" x="193.8" y="695.8">r</text><text transform="scale(1.092,1)" x="213.7" y="695.8">o</text><text transform="scale(1.092,1)" x="227.9" y="695.8">o</text><text transform="scale(1.150,1)" x="231.3" y="695.8">t</text></g>
<g font-size="26.60" fill="#000" stroke="#000" stroke-width="0.12"><text transform="scale(1.054,1)" x="464.9" y="695.8">I</text><text transform="scale(1.040,1)" x="478.7" y="695.8">W</text><text transform="scale(1.150,1)" x="457.3" y="695.8">&lt;</text></g>
<g font-size="26.60" fill="#000" stroke="#000" stroke-width="0.12"><text transform="scale(1.136,1)" x="630.3" y="695.8">0</text></g>
<g font-size="26.60" fill="#000" stroke="#000" stroke-width="0.12"><text transform="scale(1.136,1)" x="714.0" y="695.8">0</text><text transform="scale(1.135,1)" x="728.9" y="695.8">.</text><text transform="scale(1.136,1)" x="736.2" y="695.8">0</text><text transform="scale(1.136,1)" x="751.0" y="695.8">0</text></g>
<g font-size="26.60" fill="#000" stroke="#000" stroke-width="0.12"><text transform="scale(1.136,1)" x="830.2" y="695.8">1</text><rect x="946.2" y="693.6" width="10.6" height="2.2" stroke="none"/><text transform="scale(1.136,1)" x="845.0" y="695.8">3</text><text transform="scale(1.150,1)" x="849.1" y="695.8">:</text><text transform="scale(1.136,1)" x="867.6" y="695.8">5</text><text transform="scale(1.136,1)" x="882.4" y="695.8">9</text></g>
<g font-size="26.60" fill="#000" stroke="#000" stroke-width="0.12"><text transform="scale(1.136,1)" x="964.4" y="695.8">0</text><text transform="scale(1.135,1)" x="979.3" y="695.8">.</text><text transform="scale(1.136,1)" x="986.5" y="695.8">0</text><text transform="scale(1.136,1)" x="1001.3" y="695.8">0</text><text transform="scale(1.034,1)" x="1115.9" y="695.8">s</text></g>
<g font-size="26.60" fill="#000" stroke="#000" stroke-width="0.12" clip-path="url(#cc)"><text transform="scale(1.150,1)" x="1031.0" y="695.8">(</text><text transform="scale(1.150,1)" x="1040.2" y="695.8">m</text><text transform="scale(1.150,1)" x="1062.9" y="695.8">m</text><text transform="scale(0.950,1)" x="1313.5" y="695.8">_</text><text transform="scale(1.150,1)" x="1097.0" y="695.8">p</text><text transform="scale(1.115,1)" x="1147.1" y="695.8">e</text><text transform="scale(1.150,1)" x="1126.5" y="695.8">r</text><text transform="scale(1.108,1)" x="1179.0" y="695.8">c</text><text transform="scale(1.150,1)" x="1148.0" y="695.8">p</text><text transform="scale(1.148,1)" x="1164.8" y="695.8">u</text><text transform="scale(0.950,1)" x="1425.1" y="695.8">_</text><text transform="scale(1.141,1)" x="1198.9" y="695.8">w</text><text transform="scale(1.150,1)" x="1208.3" y="695.8">q</text><text transform="scale(1.150,1)" x="1223.2" y="695.8">)</text></g>
<defs><linearGradient id="vs" x1="0" y1="0" x2="1" y2="0"><stop offset="0" stop-color="#fdfdfd"/><stop offset="1" stop-color="#efefef"/></linearGradient><linearGradient id="hs" x1="0" y1="0" x2="0" y2="1"><stop offset="0" stop-color="#fdfdfd"/><stop offset="1" stop-color="#efefef"/></linearGradient></defs><rect x="1430" y="215" width="28" height="496" fill="#e6e6e6"/><rect x="1430" y="215" width="28" height="30" fill="url(#vs)"/><rect x="1430" y="245" width="28" height="56" fill="url(#vs)"/><rect x="1430" y="682" width="28" height="29" fill="url(#vs)"/><rect x="1429.3" y="215" width="1.5" height="496" fill="#bdbdbd"/><rect x="1431" y="244" width="27" height="1.5" fill="#cfcfcf"/><rect x="1431" y="301" width="27" height="1.5" fill="#d6d6d6"/><rect x="1431" y="682" width="27" height="1.5" fill="#cfcfcf"/><path d="M1436 233.7 L1450.6 233.7 L1443.3 226 Z" fill="#3c3c3c"/><path d="M1436.3 691.6 L1450.7 691.6 L1443.5 699.8 Z" fill="#3c3c3c"/><rect x="0" y="704" width="1429.3" height="7" fill="#fff"/><rect x="0" y="711" width="1458" height="31" fill="#e4e4e4"/><rect x="0" y="712" width="640" height="30" fill="url(#hs)"/><rect x="1400" y="712" width="30" height="30" fill="url(#hs)"/><rect x="1430" y="711" width="28" height="31" fill="#ededed"/><rect x="0" y="710.8" width="1458" height="1.8" fill="#b4b4b4"/><rect x="27.8" y="712" width="1.6" height="27" fill="#bcbcbc"/><rect x="639.8" y="712" width="1.8" height="27" fill="#b4b4b4"/><rect x="1400" y="712" width="1.6" height="27" fill="#c4c4c4"/><rect x="1429.4" y="711" width="1.4" height="27.5" fill="#bdbdbd"/><path d="M17 717.5 L17 733 L9 725.2 Z" fill="#3c3c3c"/><path d="M1410 717.7 L1410 732.8 L1418.4 725.2 Z" fill="#3c3c3c"/><rect x="0" y="0" width="1458" height="114" fill="#000"/>
<rect x="0" y="0" width="1458" height="1.3" fill="#6a6a6a"/>
<path d="M14.70 9.30L14.70 13.10M14.70 13.90L14.70 17.70M7.50 13.50L13.70 13.50M12.30 6.90Q14.70 6.90 14.70 9.30M12.30 20.10Q14.70 20.10 14.70 17.70" stroke="#03261d" stroke-width="2.5" stroke-linecap="round" fill="none"/><path d="M8.90 6.90L13.98 6.90M8.90 20.10L13.98 20.10M6.50 9.30L6.50 13.10M6.50 13.90L6.50 17.70M6.50 9.30Q6.50 6.90 8.90 6.90M6.50 17.70Q6.50 20.10 8.90 20.10" stroke="#00eeb4" stroke-width="2.5" stroke-linecap="round" stroke-linejoin="round" fill="none"/><path d="M21.30 20.10L24.70 20.10M27.10 13.90L27.10 17.70M18.90 17.70Q18.90 20.10 21.30 20.10M24.70 20.10Q27.10 20.10 27.10 17.70" stroke="#03261d" stroke-width="2.5" stroke-linecap="round" fill="none"/><path d="M21.30 6.90L24.70 6.90M18.90 9.30L18.90 13.10M18.90 13.90L18.90 19.38M27.10 9.30L27.10 13.10M19.90 13.50L26.10 13.50M18.90 9.30Q18.90 6.90 21.30 6.90M24.70 6.90Q27.10 6.90 27.10 9.30" stroke="#00eeb4" stroke-width="2.5" stroke-linecap="round" stroke-linejoin="round" fill="none"/><path d="M33.70 6.90L37.10 6.90M32.30 13.50L38.50 13.50M31.30 9.30Q31.30 6.90 33.70 6.90M37.10 6.90Q39.50 6.90 39.50 9.30" stroke="#03261d" stroke-width="2.5" stroke-linecap="round" fill="none"/><path d="M33.70 20.10L37.10 20.10M31.30 7.62L31.30 13.10M31.30 13.90L31.30 17.70M39.50 7.62L39.50 13.10M39.50 13.90L39.50 17.70M31.30 17.70Q31.30 20.10 33.70 20.10M37.10 20.10Q39.50 20.10 39.50 17.70" stroke="#00eeb4" stroke-width="2.5" stroke-linecap="round" stroke-linejoin="round" fill="none"/>
<rect x="47.40" y="4.2" width="2.4" height="18.4" rx="1" fill="#00eeb4"/><rect x="51.53" y="4.2" width="2.4" height="18.4" rx="1" fill="#00b888"/><rect x="55.66" y="4.2" width="2.4" height="18.4" rx="1" fill="#05503a"/><rect x="59.79" y="4.2" width="2.4" height="18.4" rx="1" fill="#05503a"/><rect x="63.92" y="4.2" width="2.4" height="18.4" rx="1" fill="#05503a"/><rect x="68.05" y="4.2" width="2.4" height="18.4" rx="1" fill="#05503a"/><rect x="72.18" y="4.2" width="2.4" height="18.4" rx="1" fill="#05503a"/><rect x="76.31" y="4.2" width="2.4" height="18.4" rx="1" fill="#05503a"/><rect x="80.44" y="4.2" width="2.4" height="18.4" rx="1" fill="#05503a"/><rect x="84.57" y="4.2" width="2.4" height="18.4" rx="1" fill="#05503a"/><rect x="88.70" y="4.2" width="2.4" height="18.4" rx="1" fill="#05503a"/><rect x="92.83" y="4.2" width="2.4" height="18.4" rx="1" fill="#05503a"/><rect x="96.96" y="4.2" width="2.4" height="18.4" rx="1" fill="#05503a"/><rect x="101.09" y="4.2" width="2.4" height="18.4" rx="1" fill="#05503a"/><rect x="105.22" y="4.2" width="2.4" height="18.4" rx="1" fill="#05503a"/><rect x="109.35" y="4.2" width="2.4" height="18.4" rx="1" fill="#05503a"/><rect x="113.48" y="4.2" width="2.4" height="18.4" rx="1" fill="#05503a"/><rect x="117.61" y="4.2" width="2.4" height="18.4" rx="1" fill="#05503a"/><rect x="121.74" y="4.2" width="2.4" height="18.4" rx="1" fill="#05503a"/><rect x="125.87" y="4.2" width="2.4" height="18.4" rx="1" fill="#05503a"/><rect x="130.00" y="4.2" width="2.4" height="18.4" rx="1" fill="#05503a"/><rect x="134.13" y="4.2" width="2.4" height="18.4" rx="1" fill="#05503a"/><rect x="138.26" y="4.2" width="2.4" height="18.4" rx="1" fill="#05503a"/><rect x="142.39" y="4.2" width="2.4" height="18.4" rx="1" fill="#05503a"/><rect x="146.52" y="4.2" width="2.4" height="18.4" rx="1" fill="#05503a"/><rect x="150.65" y="4.2" width="2.4" height="18.4" rx="1" fill="#05503a"/><rect x="154.78" y="4.2" width="2.4" height="18.4" rx="1" fill="#05503a"/><rect x="158.91" y="4.2" width="2.4" height="18.4" rx="1" fill="#05503a"/><rect x="163.04" y="4.2" width="2.4" height="18.4" rx="1" fill="#05503a"/><rect x="167.17" y="4.2" width="2.4" height="18.4" rx="1" fill="#05503a"/>
<path d="M203.20 6.90L206.60 6.90M203.20 20.10L206.60 20.10M201.80 13.50L208.00 13.50M200.80 9.30Q200.80 6.90 203.20 6.90M206.60 6.90Q209.00 6.90 209.00 9.30M200.80 17.70Q200.80 20.10 203.20 20.10M206.60 20.10Q209.00 20.10 209.00 17.70" stroke="#03261d" stroke-width="2.5" stroke-linecap="round" fill="none"/><path d="M200.80 7.62L200.80 13.10M200.80 13.90L200.80 19.38M209.00 7.62L209.00 13.10M209.00 13.90L209.00 19.38M201.40 7.50L204.90 12.80M208.40 7.50L204.90 12.80" stroke="#00eeb4" stroke-width="2.5" stroke-linecap="round" stroke-linejoin="round" fill="none"/><path d="M221.40 9.30L221.40 13.10M221.40 13.90L221.40 17.70M219.00 6.90Q221.40 6.90 221.40 9.30M219.00 20.10Q221.40 20.10 221.40 17.70" stroke="#03261d" stroke-width="2.5" stroke-linecap="round" fill="none"/><path d="M215.60 6.90L220.68 6.90M215.60 20.10L220.68 20.10M213.20 9.30L213.20 13.10M213.20 13.90L213.20 17.70M214.20 13.50L220.40 13.50M213.20 9.30Q213.20 6.90 215.60 6.90M213.20 17.70Q213.20 20.10 215.60 20.10" stroke="#00eeb4" stroke-width="2.5" stroke-linecap="round" stroke-linejoin="round" fill="none"/><path d="M228.00 6.90L231.40 6.90M228.00 20.10L231.40 20.10M226.60 13.50L232.80 13.50M225.60 9.30Q225.60 6.90 228.00 6.90M231.40 6.90Q233.80 6.90 233.80 9.30M225.60 17.70Q225.60 20.10 228.00 20.10M231.40 20.10Q233.80 20.10 233.80 17.70" stroke="#03261d" stroke-width="2.5" stroke-linecap="round" fill="none"/><path d="M225.60 7.62L225.60 13.10M225.60 13.90L225.60 19.38M233.80 7.62L233.80 13.10M233.80 13.90L233.80 19.38M226.20 7.50L229.70 12.80M233.20 7.50L229.70 12.80" stroke="#00eeb4" stroke-width="2.5" stroke-linecap="round" stroke-linejoin="round" fill="none"/>
<rect x="241.20" y="4.2" width="2.4" height="18.4" rx="1" fill="#00eeb4"/><rect x="245.33" y="4.2" width="2.4" height="18.4" rx="1" fill="#00eeb4"/><rect x="249.46" y="4.2" width="2.4" height="18.4" rx="1" fill="#00eeb4"/><rect x="253.59" y="4.2" width="2.4" height="18.4" rx="1" fill="#00eeb4"/><rect x="257.72" y="4.2" width="2.4" height="18.4" rx="1" fill="#00eeb4"/><rect x="261.85" y="4.2" width="2.4" height="18.4" rx="1" fill="#00eeb4"/><rect x="265.98" y="4.2" width="2.4" height="18.4" rx="1" fill="#00eeb4"/><rect x="270.11" y="4.2" width="2.4" height="18.4" rx="1" fill="#00eeb4"/><rect x="274.24" y="4.2" width="2.4" height="18.4" rx="1" fill="#00eeb4"/><rect x="278.37" y="4.2" width="2.4" height="18.4" rx="1" fill="#00eeb4"/><rect x="282.50" y="4.2" width="2.4" height="18.4" rx="1" fill="#00eeb4"/><rect x="286.63" y="4.2" width="2.4" height="18.4" rx="1" fill="#00eeb4"/><rect x="290.76" y="4.2" width="2.4" height="18.4" rx="1" fill="#00eeb4"/><rect x="294.89" y="4.2" width="2.4" height="18.4" rx="1" fill="#05503a"/><rect x="299.02" y="4.2" width="2.4" height="18.4" rx="1" fill="#05503a"/><rect x="303.15" y="4.2" width="2.4" height="18.4" rx="1" fill="#05503a"/><rect x="307.28" y="4.2" width="2.4" height="18.4" rx="1" fill="#05503a"/><rect x="311.41" y="4.2" width="2.4" height="18.4" rx="1" fill="#05503a"/><rect x="315.54" y="4.2" width="2.4" height="18.4" rx="1" fill="#05503a"/><rect x="319.67" y="4.2" width="2.4" height="18.4" rx="1" fill="#05503a"/><rect x="323.80" y="4.2" width="2.4" height="18.4" rx="1" fill="#05503a"/><rect x="327.93" y="4.2" width="2.4" height="18.4" rx="1" fill="#05503a"/><rect x="332.06" y="4.2" width="2.4" height="18.4" rx="1" fill="#05503a"/><rect x="336.19" y="4.2" width="2.4" height="18.4" rx="1" fill="#05503a"/><rect x="340.32" y="4.2" width="2.4" height="18.4" rx="1" fill="#05503a"/><rect x="344.45" y="4.2" width="2.4" height="18.4" rx="1" fill="#05503a"/><rect x="348.58" y="4.2" width="2.4" height="18.4" rx="1" fill="#05503a"/><rect x="352.71" y="4.2" width="2.4" height="18.4" rx="1" fill="#05503a"/><rect x="356.84" y="4.2" width="2.4" height="18.4" rx="1" fill="#05503a"/><rect x="360.97" y="4.2" width="2.4" height="18.4" rx="1" fill="#05503a"/>
<path d="M393.20 13.90L393.20 17.70M401.40 9.30L401.40 13.10M399.00 6.90Q401.40 6.90 401.40 9.30M393.20 17.70Q393.20 20.10 395.60 20.10" stroke="#03261d" stroke-width="2.5" stroke-linecap="round" fill="none"/><path d="M395.60 6.90L400.68 6.90M393.92 20.10L399.00 20.10M393.20 9.30L393.20 13.10M401.40 13.90L401.40 17.70M394.20 13.50L400.40 13.50M393.20 9.30Q393.20 6.90 395.60 6.90M399.00 20.10Q401.40 20.10 401.40 17.70" stroke="#00eeb4" stroke-width="2.5" stroke-linecap="round" stroke-linejoin="round" fill="none"/><path d="M408.00 6.90L411.40 6.90M408.00 20.10L411.40 20.10M406.60 13.50L412.80 13.50M405.60 9.30Q405.60 6.90 408.00 6.90M411.40 6.90Q413.80 6.90 413.80 9.30M405.60 17.70Q405.60 20.10 408.00 20.10M411.40 20.10Q413.80 20.10 413.80 17.70" stroke="#03261d" stroke-width="2.5" stroke-linecap="round" fill="none"/><path d="M405.60 7.62L405.60 13.10M405.60 13.90L405.60 19.38M413.80 7.62L413.80 13.10M413.80 13.90L413.80 19.38M406.20 19.50L409.70 14.20M413.20 19.50L409.70 14.20" stroke="#00eeb4" stroke-width="2.5" stroke-linecap="round" stroke-linejoin="round" fill="none"/><path d="M420.40 20.10L423.80 20.10M418.00 17.70Q418.00 20.10 420.40 20.10M423.80 20.10Q426.20 20.10 426.20 17.70" stroke="#03261d" stroke-width="2.5" stroke-linecap="round" fill="none"/><path d="M420.40 6.90L423.80 6.90M418.00 9.30L418.00 13.10M418.00 13.90L418.00 19.38M426.20 9.30L426.20 13.10M426.20 13.90L426.20 19.38M419.00 13.50L425.20 13.50M418.00 9.30Q418.00 6.90 420.40 6.90M423.80 6.90Q426.20 6.90 426.20 9.30" stroke="#00eeb4" stroke-width="2.5" stroke-linecap="round" stroke-linejoin="round" fill="none"/><path d="M432.80 20.10L436.20 20.10M438.60 13.90L438.60 17.70M430.40 17.70Q430.40 20.10 432.80 20.10M436.20 20.10Q438.60 20.10 438.60 17.70" stroke="#03261d" stroke-width="2.5" stroke-linecap="round" fill="none"/><path d="M432.80 6.90L436.20 6.90M430.40 9.30L430.40 13.10M430.40 13.90L430.40 19.38M438.60 9.30L438.60 13.10M431.40 13.50L437.60 13.50M430.40 9.30Q430.40 6.90 432.80 6.90M436.20 6.90Q438.60 6.90 438.60 9.30" stroke="#00eeb4" stroke-width="2.5" stroke-linecap="round" stroke-linejoin="round" fill="none"/>
<rect x="447.30" y="4.2" width="2.4" height="18.4" rx="1" fill="#05503a"/><rect x="451.43" y="4.2" width="2.4" height="18.4" rx="1" fill="#05503a"/><rect x="455.56" y="4.2" width="2.4" height="18.4" rx="1" fill="#05503a"/><rect x="459.69" y="4.2" width="2.4" height="18.4" rx="1" fill="#05503a"/><rect x="463.82" y="4.2" width="2.4" height="18.4" rx="1" fill="#05503a"/><rect x="467.95" y="4.2" width="2.4" height="18.4" rx="1" fill="#05503a"/><rect x="472.08" y="4.2" width="2.4" height="18.4" rx="1" fill="#05503a"/><rect x="476.21" y="4.2" width="2.4" height="18.4" rx="1" fill="#05503a"/><rect x="480.34" y="4.2" width="2.4" height="18.4" rx="1" fill="#05503a"/><rect x="484.47" y="4.2" width="2.4" height="18.4" rx="1" fill="#05503a"/><rect x="488.60" y="4.2" width="2.4" height="18.4" rx="1" fill="#05503a"/><rect x="492.73" y="4.2" width="2.4" height="18.4" rx="1" fill="#05503a"/><rect x="496.86" y="4.2" width="2.4" height="18.4" rx="1" fill="#05503a"/><rect x="500.99" y="4.2" width="2.4" height="18.4" rx="1" fill="#05503a"/><rect x="505.12" y="4.2" width="2.4" height="18.4" rx="1" fill="#05503a"/><rect x="509.25" y="4.2" width="2.4" height="18.4" rx="1" fill="#05503a"/><rect x="513.38" y="4.2" width="2.4" height="18.4" rx="1" fill="#05503a"/><rect x="517.51" y="4.2" width="2.4" height="18.4" rx="1" fill="#05503a"/><rect x="521.64" y="4.2" width="2.4" height="18.4" rx="1" fill="#05503a"/><rect x="525.77" y="4.2" width="2.4" height="18.4" rx="1" fill="#05503a"/><rect x="529.90" y="4.2" width="2.4" height="18.4" rx="1" fill="#05503a"/><rect x="534.03" y="4.2" width="2.4" height="18.4" rx="1" fill="#05503a"/><rect x="538.16" y="4.2" width="2.4" height="18.4" rx="1" fill="#05503a"/><rect x="542.29" y="4.2" width="2.4" height="18.4" rx="1" fill="#05503a"/><rect x="546.42" y="4.2" width="2.4" height="18.4" rx="1" fill="#05503a"/><rect x="550.55" y="4.2" width="2.4" height="18.4" rx="1" fill="#05503a"/><rect x="554.68" y="4.2" width="2.4" height="18.4" rx="1" fill="#05503a"/><rect x="558.81" y="4.2" width="2.4" height="18.4" rx="1" fill="#05503a"/><rect x="562.94" y="4.2" width="2.4" height="18.4" rx="1" fill="#05503a"/><rect x="567.07" y="4.2" width="2.4" height="18.4" rx="1" fill="#05503a"/>
<path d="M598.30 6.90L601.70 6.90M596.90 13.50L603.10 13.50M595.90 9.30Q595.90 6.90 598.30 6.90M601.70 6.90Q604.10 6.90 604.10 9.30" stroke="#03261d" stroke-width="2.5" stroke-linecap="round" fill="none"/><path d="M598.30 20.10L601.70 20.10M595.90 7.62L595.90 13.10M595.90 13.90L595.90 17.70M604.10 7.62L604.10 13.10M604.10 13.90L604.10 17.70M595.90 17.70Q595.90 20.10 598.30 20.10M601.70 20.10Q604.10 20.10 604.10 17.70" stroke="#00eeb4" stroke-width="2.5" stroke-linecap="round" stroke-linejoin="round" fill="none"/><path d="M610.70 20.10L614.10 20.10M616.50 13.90L616.50 17.70M608.30 17.70Q608.30 20.10 610.70 20.10M614.10 20.10Q616.50 20.10 616.50 17.70" stroke="#03261d" stroke-width="2.5" stroke-linecap="round" fill="none"/><path d="M610.70 6.90L614.10 6.90M608.30 9.30L608.30 13.10M608.30 13.90L608.30 19.38M616.50 9.30L616.50 13.10M609.30 13.50L615.50 13.50M608.30 9.30Q608.30 6.90 610.70 6.90M614.10 6.90Q616.50 6.90 616.50 9.30" stroke="#00eeb4" stroke-width="2.5" stroke-linecap="round" stroke-linejoin="round" fill="none"/><path d="M623.10 20.10L626.50 20.10M620.70 9.30L620.70 13.10M620.70 13.90L620.70 17.70M628.90 9.30L628.90 13.10M628.90 13.90L628.90 17.70M621.70 13.50L627.90 13.50M620.70 9.30Q620.70 6.90 623.10 6.90M626.50 6.90Q628.90 6.90 628.90 9.30M620.70 17.70Q620.70 20.10 623.10 20.10M626.50 20.10Q628.90 20.10 628.90 17.70" stroke="#03261d" stroke-width="2.5" stroke-linecap="round" fill="none"/><path d="M621.42 6.90L628.18 6.90M624.80 8.20L624.80 12.60M624.80 14.40L624.80 18.80" stroke="#00eeb4" stroke-width="2.5" stroke-linecap="round" stroke-linejoin="round" fill="none"/><path d="M635.50 6.90L638.90 6.90M635.50 20.10L638.90 20.10M633.10 9.30L633.10 13.10M633.10 13.90L633.10 17.70M641.30 9.30L641.30 13.10M641.30 13.90L641.30 17.70M634.10 13.50L640.30 13.50M633.10 9.30Q633.10 6.90 635.50 6.90M638.90 6.90Q641.30 6.90 641.30 9.30M633.10 17.70Q633.10 20.10 635.50 20.10M638.90 20.10Q641.30 20.10 641.30 17.70" stroke="#03261d" stroke-width="2.5" stroke-linecap="round" fill="none"/><path d="M637.20 8.20L637.20 12.60M637.20 14.40L637.20 18.80" stroke="#00eeb4" stroke-width="2.5" stroke-linecap="round" stroke-linejoin="round" fill="none"/><path d="M647.90 6.90L651.30 6.90M647.90 20.10L651.30 20.10M646.50 13.50L652.70 13.50M645.50 9.30Q645.50 6.90 647.90 6.90M651.30 6.90Q653.70 6.90 653.70 9.30M645.50 17.70Q645.50 20.10 647.90 20.10M651.30 20.10Q653.70 20.10 653.70 17.70" stroke="#03261d" stroke-width="2.5" stroke-linecap="round" fill="none"/><path d="M645.50 7.62L645.50 13.10M645.50 13.90L645.50 19.38M653.70 7.62L653.70 13.10M653.70 13.90L653.70 19.38M646.10 7.50L649.60 12.80M653.10 7.50L649.60 12.80" stroke="#00eeb4" stroke-width="2.5" stroke-linecap="round" stroke-linejoin="round" fill="none"/><path d="M666.10 9.30L666.10 13.10M666.10 13.90L666.10 17.70M663.70 6.90Q666.10 6.90 666.10 9.30M663.70 20.10Q666.10 20.10 666.10 17.70" stroke="#03261d" stroke-width="2.5" stroke-linecap="round" fill="none"/><path d="M660.30 6.90L665.38 6.90M660.30 20.10L665.38 20.10M657.90 9.30L657.90 13.10M657.90 13.90L657.90 17.70M658.90 13.50L665.10 13.50M657.90 9.30Q657.90 6.90 660.30 6.90M657.90 17.70Q657.90 20.10 660.30 20.10" stroke="#00eeb4" stroke-width="2.5" stroke-linecap="round" stroke-linejoin="round" fill="none"/><path d="M672.70 6.90L676.10 6.90M672.70 20.10L676.10 20.10M670.30 9.30L670.30 13.10M670.30 13.90L670.30 17.70M678.50 9.30L678.50 13.10M678.50 13.90L678.50 17.70M671.30 13.50L677.50 13.50M670.30 9.30Q670.30 6.90 672.70 6.90M676.10 6.90Q678.50 6.90 678.50 9.30M670.30 17.70Q670.30 20.10 672.70 20.10M676.10 20.10Q678.50 20.10 678.50 17.70" stroke="#03261d" stroke-width="2.5" stroke-linecap="round" fill="none"/><path d="M682.70 9.30L682.70 13.10M690.90 13.90L690.90 17.70M682.70 9.30Q682.70 6.90 685.10 6.90M688.50 20.10Q690.90 20.10 690.90 17.70" stroke="#03261d" stroke-width="2.5" stroke-linecap="round" fill="none"/><path d="M683.42 6.90L688.50 6.90M685.10 20.10L690.18 20.10M682.70 13.90L682.70 17.70M690.90 9.30L690.90 13.10M683.70 13.50L689.90 13.50M688.50 6.90Q690.90 6.90 690.90 9.30M682.70 17.70Q682.70 20.10 685.10 20.10" stroke="#00eeb4" stroke-width="2.5" stroke-linecap="round" stroke-linejoin="round" fill="none"/><path d="M697.50 6.90L700.90 6.90M697.50 20.10L700.90 20.10M695.10 9.30L695.10 13.10M695.10 13.90L695.10 17.70M703.30 9.30L703.30 13.10M703.30 13.90L703.30 17.70M696.10 13.50L702.30 13.50M695.10 9.30Q695.10 6.90 697.50 6.90M700.90 6.90Q703.30 6.90 703.30 9.30M695.10 17.70Q695.10 20.10 697.50 20.10M700.90 20.10Q703.30 20.10 703.30 17.70" stroke="#00eeb4" stroke-width="2.5" stroke-linecap="round" stroke-linejoin="round" fill="none"/><path d="M709.90 6.90L713.30 6.90M709.90 20.10L713.30 20.10M707.50 9.30L707.50 13.10M707.50 13.90L707.50 17.70M715.70 9.30L715.70 13.10M715.70 13.90L715.70 17.70M708.50 13.50L714.70 13.50M707.50 9.30Q707.50 6.90 709.90 6.90M713.30 6.90Q715.70 6.90 715.70 9.30M707.50 17.70Q707.50 20.10 709.90 20.10M713.30 20.10Q715.70 20.10 715.70 17.70" stroke="#03261d" stroke-width="2.5" stroke-linecap="round" fill="none"/><path d="M710.2 8.5L713.0 8.5L711.6 12.2ZM710.2 18.5L713.0 18.5L711.6 14.8Z" fill="#00eeb4"/><path d="M722.30 6.90L725.70 6.90M722.30 20.10L725.70 20.10M719.90 13.90L719.90 17.70M719.90 9.30Q719.90 6.90 722.30 6.90M725.70 6.90Q728.10 6.90 728.10 9.30M719.90 17.70Q719.90 20.10 722.30 20.10M725.70 20.10Q728.10 20.10 728.10 17.70" stroke="#03261d" stroke-width="2.5" stroke-linecap="round" fill="none"/><path d="M719.90 7.62L719.90 13.10M728.10 7.62L728.10 13.10M728.10 13.90L728.10 19.38M720.90 13.50L727.10 13.50" stroke="#00eeb4" stroke-width="2.5" stroke-linecap="round" stroke-linejoin="round" fill="none"/><path d="M734.70 6.90L738.10 6.90M734.70 20.10L738.10 20.10M732.30 9.30L732.30 13.10M732.30 13.90L732.30 17.70M740.50 9.30L740.50 13.10M740.50 13.90L740.50 17.70M733.30 13.50L739.50 13.50M732.30 9.30Q732.30 6.90 734.70 6.90M738.10 6.90Q740.50 6.90 740.50 9.30M732.30 17.70Q732.30 20.10 734.70 20.10M738.10 20.10Q740.50 20.10 740.50 17.70" stroke="#00eeb4" stroke-width="2.5" stroke-linecap="round" stroke-linejoin="round" fill="none"/>
<path d="M1138.30 6.90L1141.70 6.90M1138.30 20.10L1141.70 20.10M1135.90 9.30L1135.90 13.10M1135.90 13.90L1135.90 17.70M1144.10 9.30L1144.10 13.10M1144.10 13.90L1144.10 17.70M1136.90 13.50L1143.10 13.50M1135.90 9.30Q1135.90 6.90 1138.30 6.90M1141.70 6.90Q1144.10 6.90 1144.10 9.30M1135.90 17.70Q1135.90 20.10 1138.30 20.10M1141.70 20.10Q1144.10 20.10 1144.10 17.70" stroke="#03261d" stroke-width="2.5" stroke-linecap="round" fill="none"/><path d="M1150.70 6.90L1154.10 6.90M1150.70 20.10L1154.10 20.10M1148.30 9.30L1148.30 13.10M1148.30 13.90L1148.30 17.70M1156.50 9.30L1156.50 13.10M1156.50 13.90L1156.50 17.70M1149.30 13.50L1155.50 13.50M1148.30 9.30Q1148.30 6.90 1150.70 6.90M1154.10 6.90Q1156.50 6.90 1156.50 9.30M1148.30 17.70Q1148.30 20.10 1150.70 20.10M1154.10 20.10Q1156.50 20.10 1156.50 17.70" stroke="#03261d" stroke-width="2.5" stroke-linecap="round" fill="none"/><path d="M1152.40 8.20L1152.40 12.60M1152.40 14.40L1152.40 18.80" stroke="#00eeb4" stroke-width="2.5" stroke-linecap="round" stroke-linejoin="round" fill="none"/><path d="M1163.10 6.90L1166.50 6.90M1160.70 9.30L1160.70 13.10M1168.90 9.30L1168.90 13.10" stroke="#03261d" stroke-width="2.5" stroke-linecap="round" fill="none"/><path d="M1160.70 20.10L1160.70 15.90Q1160.70 13.50 1163.10 13.50L1166.50 13.50Q1168.90 13.50 1168.90 15.90L1168.90 20.10M1164.80 13.50L1164.80 20.10" stroke="#00eeb4" stroke-width="2.5" stroke-linecap="round" stroke-linejoin="round" fill="none"/><path d="M1175.50 6.90L1178.90 6.90M1175.50 20.10L1178.90 20.10M1173.10 9.30L1173.10 13.10M1173.10 13.90L1173.10 17.70M1181.30 9.30L1181.30 13.10M1181.30 13.90L1181.30 17.70M1174.10 13.50L1180.30 13.50M1173.10 9.30Q1173.10 6.90 1175.50 6.90M1178.90 6.90Q1181.30 6.90 1181.30 9.30M1173.10 17.70Q1173.10 20.10 1175.50 20.10M1178.90 20.10Q1181.30 20.10 1181.30 17.70" stroke="#03261d" stroke-width="2.5" stroke-linecap="round" fill="none"/><path d="M1187.90 6.90L1191.30 6.90M1187.90 20.10L1191.30 20.10M1185.50 9.30L1185.50 13.10M1185.50 13.90L1185.50 17.70M1193.70 9.30L1193.70 13.10M1193.70 13.90L1193.70 17.70M1186.50 13.50L1192.70 13.50M1185.50 9.30Q1185.50 6.90 1187.90 6.90M1191.30 6.90Q1193.70 6.90 1193.70 9.30M1185.50 17.70Q1185.50 20.10 1187.90 20.10M1191.30 20.10Q1193.70 20.10 1193.70 17.70" stroke="#03261d" stroke-width="2.5" stroke-linecap="round" fill="none"/><path d="M1189.60 8.20L1189.60 12.60M1189.60 14.40L1189.60 18.80" stroke="#00eeb4" stroke-width="2.5" stroke-linecap="round" stroke-linejoin="round" fill="none"/><path d="M1200.30 6.90L1203.70 6.90M1200.30 20.10L1203.70 20.10M1197.90 9.30L1197.90 13.10M1197.90 13.90L1197.90 17.70M1206.10 9.30L1206.10 13.10M1206.10 13.90L1206.10 17.70M1198.90 13.50L1205.10 13.50M1197.90 9.30Q1197.90 6.90 1200.30 6.90M1203.70 6.90Q1206.10 6.90 1206.10 9.30M1197.90 17.70Q1197.90 20.10 1200.30 20.10M1203.70 20.10Q1206.10 20.10 1206.10 17.70" stroke="#03261d" stroke-width="2.5" stroke-linecap="round" fill="none"/><circle cx="1202.0" cy="20.2" r="1.7" fill="#00eeb4"/><path d="M1211.30 13.50L1217.50 13.50" stroke="#03261d" stroke-width="2.5" stroke-linecap="round" fill="none"/><path d="M1212.70 6.90L1216.10 6.90M1212.70 20.10L1216.10 20.10M1210.30 9.30L1210.30 13.10M1210.30 13.90L1210.30 17.70M1218.50 9.30L1218.50 13.10M1218.50 13.90L1218.50 17.70M1210.30 9.30Q1210.30 6.90 1212.70 6.90M1216.10 6.90Q1218.50 6.90 1218.50 9.30M1210.30 17.70Q1210.30 20.10 1212.70 20.10M1216.10 20.10Q1218.50 20.10 1218.50 17.70M1217.60 8.20L1211.20 18.80" stroke="#00eeb4" stroke-width="2.5" stroke-linecap="round" stroke-linejoin="round" fill="none"/><path d="M1223.70 13.50L1229.90 13.50" stroke="#03261d" stroke-width="2.5" stroke-linecap="round" fill="none"/><path d="M1225.10 6.90L1228.50 6.90M1225.10 20.10L1228.50 20.10M1222.70 9.30L1222.70 13.10M1222.70 13.90L1222.70 17.70M1230.90 9.30L1230.90 13.10M1230.90 13.90L1230.90 17.70M1222.70 9.30Q1222.70 6.90 1225.10 6.90M1228.50 6.90Q1230.90 6.90 1230.90 9.30M1222.70 17.70Q1222.70 20.10 1225.10 20.10M1228.50 20.10Q1230.90 20.10 1230.90 17.70M1230.00 8.20L1223.60 18.80" stroke="#00eeb4" stroke-width="2.5" stroke-linecap="round" stroke-linejoin="round" fill="none"/><path d="M1237.50 6.90L1240.90 6.90M1237.50 20.10L1240.90 20.10M1235.10 9.30L1235.10 13.10M1235.10 13.90L1235.10 17.70M1243.30 9.30L1243.30 13.10M1243.30 13.90L1243.30 17.70M1236.10 13.50L1242.30 13.50M1235.10 9.30Q1235.10 6.90 1237.50 6.90M1240.90 6.90Q1243.30 6.90 1243.30 9.30M1235.10 17.70Q1235.10 20.10 1237.50 20.10M1240.90 20.10Q1243.30 20.10 1243.30 17.70" stroke="#03261d" stroke-width="2.5" stroke-linecap="round" fill="none"/><path d="M1247.50 13.90L1247.50 17.70M1255.70 9.30L1255.70 13.10M1253.30 6.90Q1255.70 6.90 1255.70 9.30M1247.50 17.70Q1247.50 20.10 1249.90 20.10" stroke="#03261d" stroke-width="2.5" stroke-linecap="round" fill="none"/><path d="M1249.90 6.90L1254.98 6.90M1248.22 20.10L1253.30 20.10M1247.50 9.30L1247.50 13.10M1255.70 13.90L1255.70 17.70M1248.50 13.50L1254.70 13.50M1247.50 9.30Q1247.50 6.90 1249.90 6.90M1253.30 20.10Q1255.70 20.10 1255.70 17.70" stroke="#00eeb4" stroke-width="2.5" stroke-linecap="round" stroke-linejoin="round" fill="none"/><path d="M1262.30 6.90L1265.70 6.90M1259.90 9.30L1259.90 13.10M1268.10 9.30L1268.10 13.10" stroke="#03261d" stroke-width="2.5" stroke-linecap="round" fill="none"/><path d="M1259.90 20.10L1259.90 15.90Q1259.90 13.50 1262.30 13.50L1265.70 13.50Q1268.10 13.50 1268.10 15.90L1268.10 20.10M1264.00 13.50L1264.00 20.10" stroke="#00eeb4" stroke-width="2.5" stroke-linecap="round" stroke-linejoin="round" fill="none"/><path d="M1274.70 6.90L1278.10 6.90M1274.70 20.10L1278.10 20.10M1272.30 9.30L1272.30 13.10M1272.30 13.90L1272.30 17.70M1280.50 9.30L1280.50 13.10M1280.50 13.90L1280.50 17.70M1273.30 13.50L1279.50 13.50M1272.30 9.30Q1272.30 6.90 1274.70 6.90M1278.10 6.90Q1280.50 6.90 1280.50 9.30M1272.30 17.70Q1272.30 20.10 1274.70 20.10M1278.10 20.10Q1280.50 20.10 1280.50 17.70" stroke="#03261d" stroke-width="2.5" stroke-linecap="round" fill="none"/><path d="M1285.70 13.50L1291.90 13.50" stroke="#03261d" stroke-width="2.5" stroke-linecap="round" fill="none"/><path d="M1287.10 6.90L1290.50 6.90M1287.10 20.10L1290.50 20.10M1284.70 9.30L1284.70 13.10M1284.70 13.90L1284.70 17.70M1292.90 9.30L1292.90 13.10M1292.90 13.90L1292.90 17.70M1284.70 9.30Q1284.70 6.90 1287.10 6.90M1290.50 6.90Q1292.90 6.90 1292.90 9.30M1284.70 17.70Q1284.70 20.10 1287.10 20.10M1290.50 20.10Q1292.90 20.10 1292.90 17.70M1292.00 8.20L1285.60 18.80" stroke="#00eeb4" stroke-width="2.5" stroke-linecap="round" stroke-linejoin="round" fill="none"/><path d="M1299.50 6.90L1302.90 6.90M1299.50 20.10L1302.90 20.10M1297.10 9.30L1297.10 13.10M1297.10 13.90L1297.10 17.70M1305.30 9.30L1305.30 13.10M1305.30 13.90L1305.30 17.70M1298.10 13.50L1304.30 13.50M1297.10 9.30Q1297.10 6.90 1299.50 6.90M1302.90 6.90Q1305.30 6.90 1305.30 9.30M1297.10 17.70Q1297.10 20.10 1299.50 20.10M1302.90 20.10Q1305.30 20.10 1305.30 17.70" stroke="#03261d" stroke-width="2.5" stroke-linecap="round" fill="none"/><circle cx="1301.2" cy="20.2" r="1.7" fill="#00eeb4"/><path d="M1310.50 13.50L1316.70 13.50" stroke="#03261d" stroke-width="2.5" stroke-linecap="round" fill="none"/><path d="M1311.90 6.90L1315.30 6.90M1311.90 20.10L1315.30 20.10M1309.50 9.30L1309.50 13.10M1309.50 13.90L1309.50 17.70M1317.70 9.30L1317.70 13.10M1317.70 13.90L1317.70 17.70M1309.50 9.30Q1309.50 6.90 1311.90 6.90M1315.30 6.90Q1317.70 6.90 1317.70 9.30M1309.50 17.70Q1309.50 20.10 1311.90 20.10M1315.30 20.10Q1317.70 20.10 1317.70 17.70M1316.80 8.20L1310.40 18.80" stroke="#00eeb4" stroke-width="2.5" stroke-linecap="round" stroke-linejoin="round" fill="none"/><path d="M1322.90 13.50L1329.10 13.50" stroke="#03261d" stroke-width="2.5" stroke-linecap="round" fill="none"/><path d="M1324.30 6.90L1327.70 6.90M1324.30 20.10L1327.70 20.10M1321.90 9.30L1321.90 13.10M1321.90 13.90L1321.90 17.70M1330.10 9.30L1330.10 13.10M1330.10 13.90L1330.10 17.70M1321.90 9.30Q1321.90 6.90 1324.30 6.90M1327.70 6.90Q1330.10 6.90 1330.10 9.30M1321.90 17.70Q1321.90 20.10 1324.30 20.10M1327.70 20.10Q1330.10 20.10 1330.10 17.70M1329.20 8.20L1322.80 18.80" stroke="#00eeb4" stroke-width="2.5" stroke-linecap="round" stroke-linejoin="round" fill="none"/><path d="M1336.70 6.90L1340.10 6.90M1336.70 20.10L1340.10 20.10M1334.30 9.30L1334.30 13.10M1334.30 13.90L1334.30 17.70M1342.50 9.30L1342.50 13.10M1342.50 13.90L1342.50 17.70M1335.30 13.50L1341.50 13.50M1334.30 9.30Q1334.30 6.90 1336.70 6.90M1340.10 6.90Q1342.50 6.90 1342.50 9.30M1334.30 17.70Q1334.30 20.10 1336.70 20.10M1340.10 20.10Q1342.50 20.10 1342.50 17.70" stroke="#03261d" stroke-width="2.5" stroke-linecap="round" fill="none"/><path d="M1349.10 6.90L1352.50 6.90M1349.10 20.10L1352.50 20.10M1346.70 9.30L1346.70 13.10M1346.70 13.90L1346.70 17.70M1354.90 9.30L1354.90 13.10M1354.90 13.90L1354.90 17.70M1347.70 13.50L1353.90 13.50M1346.70 9.30Q1346.70 6.90 1349.10 6.90M1352.50 6.90Q1354.90 6.90 1354.90 9.30M1346.70 17.70Q1346.70 20.10 1349.10 20.10M1352.50 20.10Q1354.90 20.10 1354.90 17.70" stroke="#03261d" stroke-width="2.5" stroke-linecap="round" fill="none"/><path d="M1350.80 8.20L1350.80 12.60M1350.80 14.40L1350.80 18.80" stroke="#00eeb4" stroke-width="2.5" stroke-linecap="round" stroke-linejoin="round" fill="none"/><path d="M1359.10 13.90L1359.10 17.70M1367.30 9.30L1367.30 13.10M1364.90 6.90Q1367.30 6.90 1367.30 9.30M1359.10 17.70Q1359.10 20.10 1361.50 20.10" stroke="#03261d" stroke-width="2.5" stroke-linecap="round" fill="none"/><path d="M1361.50 6.90L1366.58 6.90M1359.82 20.10L1364.90 20.10M1359.10 9.30L1359.10 13.10M1367.30 13.90L1367.30 17.70M1360.10 13.50L1366.30 13.50M1359.10 9.30Q1359.10 6.90 1361.50 6.90M1364.90 20.10Q1367.30 20.10 1367.30 17.70" stroke="#00eeb4" stroke-width="2.5" stroke-linecap="round" stroke-linejoin="round" fill="none"/><path d="M1373.90 6.90L1377.30 6.90M1371.50 9.30L1371.50 13.10M1379.70 9.30L1379.70 13.10" stroke="#03261d" stroke-width="2.5" stroke-linecap="round" fill="none"/><path d="M1371.50 20.10L1371.50 15.90Q1371.50 13.50 1373.90 13.50L1377.30 13.50Q1379.70 13.50 1379.70 15.90L1379.70 20.10M1375.60 13.50L1375.60 20.10" stroke="#00eeb4" stroke-width="2.5" stroke-linecap="round" stroke-linejoin="round" fill="none"/><path d="M1386.30 6.90L1389.70 6.90M1386.30 20.10L1389.70 20.10M1383.90 9.30L1383.90 13.10M1383.90 13.90L1383.90 17.70M1392.10 9.30L1392.10 13.10M1392.10 13.90L1392.10 17.70M1384.90 13.50L1391.10 13.50M1383.90 9.30Q1383.90 6.90 1386.30 6.90M1389.70 6.90Q1392.10 6.90 1392.10 9.30M1383.90 17.70Q1383.90 20.10 1386.30 20.10M1389.70 20.10Q1392.10 20.10 1392.10 17.70" stroke="#03261d" stroke-width="2.5" stroke-linecap="round" fill="none"/><path d="M1397.30 13.50L1403.50 13.50" stroke="#03261d" stroke-width="2.5" stroke-linecap="round" fill="none"/><path d="M1398.70 6.90L1402.10 6.90M1398.70 20.10L1402.10 20.10M1396.30 9.30L1396.30 13.10M1396.30 13.90L1396.30 17.70M1404.50 9.30L1404.50 13.10M1404.50 13.90L1404.50 17.70M1396.30 9.30Q1396.30 6.90 1398.70 6.90M1402.10 6.90Q1404.50 6.90 1404.50 9.30M1396.30 17.70Q1396.30 20.10 1398.70 20.10M1402.10 20.10Q1404.50 20.10 1404.50 17.70M1403.60 8.20L1397.20 18.80" stroke="#00eeb4" stroke-width="2.5" stroke-linecap="round" stroke-linejoin="round" fill="none"/><path d="M1411.10 6.90L1414.50 6.90M1411.10 20.10L1414.50 20.10M1408.70 9.30L1408.70 13.10M1408.70 13.90L1408.70 17.70M1416.90 9.30L1416.90 13.10M1416.90 13.90L1416.90 17.70M1409.70 13.50L1415.90 13.50M1408.70 9.30Q1408.70 6.90 1411.10 6.90M1414.50 6.90Q1416.90 6.90 1416.90 9.30M1408.70 17.70Q1408.70 20.10 1411.10 20.10M1414.50 20.10Q1416.90 20.10 1416.90 17.70" stroke="#03261d" stroke-width="2.5" stroke-linecap="round" fill="none"/><circle cx="1412.8" cy="20.2" r="1.7" fill="#00eeb4"/><path d="M1422.10 13.50L1428.30 13.50" stroke="#03261d" stroke-width="2.5" stroke-linecap="round" fill="none"/><path d="M1423.50 6.90L1426.90 6.90M1423.50 20.10L1426.90 20.10M1421.10 9.30L1421.10 13.10M1421.10 13.90L1421.10 17.70M1429.30 9.30L1429.30 13.10M1429.30 13.90L1429.30 17.70M1421.10 9.30Q1421.10 6.90 1423.50 6.90M1426.90 6.90Q1429.30 6.90 1429.30 9.30M1421.10 17.70Q1421.10 20.10 1423.50 20.10M1426.90 20.10Q1429.30 20.10 1429.30 17.70M1428.40 8.20L1422.00 18.80" stroke="#00eeb4" stroke-width="2.5" stroke-linecap="round" stroke-linejoin="round" fill="none"/><path d="M1434.50 13.50L1440.70 13.50" stroke="#03261d" stroke-width="2.5" stroke-linecap="round" fill="none"/><path d="M1435.90 6.90L1439.30 6.90M1435.90 20.10L1439.30 20.10M1433.50 9.30L1433.50 13.10M1433.50 13.90L1433.50 17.70M1441.70 9.30L1441.70 13.10M1441.70 13.90L1441.70 17.70M1433.50 9.30Q1433.50 6.90 1435.90 6.90M1439.30 6.90Q1441.70 6.90 1441.70 9.30M1433.50 17.70Q1433.50 20.10 1435.90 20.10M1439.30 20.10Q1441.70 20.10 1441.70 17.70M1440.80 8.20L1434.40 18.80" stroke="#00eeb4" stroke-width="2.5" stroke-linecap="round" stroke-linejoin="round" fill="none"/>
<path d="M32.90 36.00L39.10 36.00" stroke="#03261d" stroke-width="2.3" stroke-linecap="round" fill="none"/><path d="M34.30 29.40L37.70 29.40M34.30 42.60L37.70 42.60M31.90 31.80L31.90 35.60M31.90 36.40L31.90 40.20M40.10 31.80L40.10 35.60M40.10 36.40L40.10 40.20M31.90 31.80Q31.90 29.40 34.30 29.40M37.70 29.40Q40.10 29.40 40.10 31.80M31.90 40.20Q31.90 42.60 34.30 42.60M37.70 42.60Q40.10 42.60 40.10 40.20M39.20 30.70L32.80 41.30" stroke="#00a47c" stroke-width="2.3" stroke-linecap="round" stroke-linejoin="round" fill="none"/>
<rect x="45.20" y="27.6" width="2.4" height="16.2" rx="1" fill="#00a47c"/><rect x="49.33" y="27.6" width="2.4" height="16.2" rx="1" fill="#00a47c"/><rect x="53.46" y="27.6" width="2.4" height="16.2" rx="1" fill="#043a2c"/><rect x="57.59" y="27.6" width="2.4" height="16.2" rx="1" fill="#043a2c"/><rect x="61.72" y="27.6" width="2.4" height="16.2" rx="1" fill="#043a2c"/><rect x="65.85" y="27.6" width="2.4" height="16.2" rx="1" fill="#043a2c"/><rect x="69.98" y="27.6" width="2.4" height="16.2" rx="1" fill="#043a2c"/><rect x="74.11" y="27.6" width="2.4" height="16.2" rx="1" fill="#043a2c"/><rect x="78.24" y="27.6" width="2.4" height="16.2" rx="1" fill="#043a2c"/><rect x="82.37" y="27.6" width="2.4" height="16.2" rx="1" fill="#043a2c"/><rect x="86.50" y="27.6" width="2.4" height="16.2" rx="1" fill="#043a2c"/><rect x="90.63" y="27.6" width="2.4" height="16.2" rx="1" fill="#043a2c"/><rect x="94.76" y="27.6" width="2.4" height="16.2" rx="1" fill="#043a2c"/><rect x="98.89" y="27.6" width="2.4" height="16.2" rx="1" fill="#043a2c"/><rect x="103.02" y="27.6" width="2.4" height="16.2" rx="1" fill="#043a2c"/>
<path d="M113.40 31.80L113.40 35.60M121.60 36.40L121.60 40.20M113.40 31.80Q113.40 29.40 115.80 29.40M119.20 42.60Q121.60 42.60 121.60 40.20" stroke="#03261d" stroke-width="2.3" stroke-linecap="round" fill="none"/><path d="M114.12 29.40L119.20 29.40M115.80 42.60L120.88 42.60M113.40 36.40L113.40 40.20M121.60 31.80L121.60 35.60M114.40 36.00L120.60 36.00M119.20 29.40Q121.60 29.40 121.60 31.80M113.40 40.20Q113.40 42.60 115.80 42.60" stroke="#00a47c" stroke-width="2.3" stroke-linecap="round" stroke-linejoin="round" fill="none"/>
<rect x="126.80" y="27.6" width="2.4" height="16.2" rx="1" fill="#00a47c"/><rect x="130.93" y="27.6" width="2.4" height="16.2" rx="1" fill="#00a47c"/><rect x="135.06" y="27.6" width="2.4" height="16.2" rx="1" fill="#043a2c"/><rect x="139.19" y="27.6" width="2.4" height="16.2" rx="1" fill="#043a2c"/><rect x="143.32" y="27.6" width="2.4" height="16.2" rx="1" fill="#043a2c"/><rect x="147.45" y="27.6" width="2.4" height="16.2" rx="1" fill="#043a2c"/><rect x="151.58" y="27.6" width="2.4" height="16.2" rx="1" fill="#043a2c"/><rect x="155.71" y="27.6" width="2.4" height="16.2" rx="1" fill="#043a2c"/><rect x="159.84" y="27.6" width="2.4" height="16.2" rx="1" fill="#043a2c"/><rect x="163.97" y="27.6" width="2.4" height="16.2" rx="1" fill="#043a2c"/><rect x="168.10" y="27.6" width="2.4" height="16.2" rx="1" fill="#043a2c"/><rect x="172.23" y="27.6" width="2.4" height="16.2" rx="1" fill="#043a2c"/><rect x="176.36" y="27.6" width="2.4" height="16.2" rx="1" fill="#043a2c"/><rect x="180.49" y="27.6" width="2.4" height="16.2" rx="1" fill="#043a2c"/><rect x="184.62" y="27.6" width="2.4" height="16.2" rx="1" fill="#043a2c"/>
<path d="M34.30 47.90L37.70 47.90M34.30 61.10L37.70 61.10M31.90 50.30L31.90 54.10M31.90 54.90L31.90 58.70M40.10 50.30L40.10 54.10M40.10 54.90L40.10 58.70M32.90 54.50L39.10 54.50M31.90 50.30Q31.90 47.90 34.30 47.90M37.70 47.90Q40.10 47.90 40.10 50.30M31.90 58.70Q31.90 61.10 34.30 61.10M37.70 61.10Q40.10 61.10 40.10 58.70" stroke="#03261d" stroke-width="2.3" stroke-linecap="round" fill="none"/><path d="M36.00 49.20L36.00 53.60M36.00 55.40L36.00 59.80" stroke="#00806a" stroke-width="2.3" stroke-linecap="round" stroke-linejoin="round" fill="none"/>
<rect x="45.20" y="46.6" width="2.4" height="15.9" rx="1" fill="#00806a"/><rect x="49.33" y="46.6" width="2.4" height="15.9" rx="1" fill="#00806a"/><rect x="53.46" y="46.6" width="2.4" height="15.9" rx="1" fill="#032e24"/><rect x="57.59" y="46.6" width="2.4" height="15.9" rx="1" fill="#032e24"/><rect x="61.72" y="46.6" width="2.4" height="15.9" rx="1" fill="#032e24"/><rect x="65.85" y="46.6" width="2.4" height="15.9" rx="1" fill="#032e24"/><rect x="69.98" y="46.6" width="2.4" height="15.9" rx="1" fill="#032e24"/><rect x="74.11" y="46.6" width="2.4" height="15.9" rx="1" fill="#032e24"/><rect x="78.24" y="46.6" width="2.4" height="15.9" rx="1" fill="#032e24"/><rect x="82.37" y="46.6" width="2.4" height="15.9" rx="1" fill="#032e24"/><rect x="86.50" y="46.6" width="2.4" height="15.9" rx="1" fill="#032e24"/><rect x="90.63" y="46.6" width="2.4" height="15.9" rx="1" fill="#032e24"/><rect x="94.76" y="46.6" width="2.4" height="15.9" rx="1" fill="#032e24"/><rect x="98.89" y="46.6" width="2.4" height="15.9" rx="1" fill="#032e24"/><rect x="103.02" y="46.6" width="2.4" height="15.9" rx="1" fill="#032e24"/>
<path d="M113.40 50.30L113.40 54.10M113.40 54.90L113.40 58.70M113.40 50.30Q113.40 47.90 115.80 47.90M113.40 58.70Q113.40 61.10 115.80 61.10" stroke="#03261d" stroke-width="2.3" stroke-linecap="round" fill="none"/><path d="M114.12 47.90L119.20 47.90M114.12 61.10L119.20 61.10M121.60 50.30L121.60 54.10M121.60 54.90L121.60 58.70M114.40 54.50L120.60 54.50M119.20 47.90Q121.60 47.90 121.60 50.30M119.20 61.10Q121.60 61.10 121.60 58.70" stroke="#00806a" stroke-width="2.3" stroke-linecap="round" stroke-linejoin="round" fill="none"/>
<rect x="126.80" y="46.6" width="2.4" height="15.9" rx="1" fill="#00806a"/><rect x="130.93" y="46.6" width="2.4" height="15.9" rx="1" fill="#00806a"/><rect x="135.06" y="46.6" width="2.4" height="15.9" rx="1" fill="#032e24"/><rect x="139.19" y="46.6" width="2.4" height="15.9" rx="1" fill="#032e24"/><rect x="143.32" y="46.6" width="2.4" height="15.9" rx="1" fill="#032e24"/><rect x="147.45" y="46.6" width="2.4" height="15.9" rx="1" fill="#032e24"/><rect x="151.58" y="46.6" width="2.4" height="15.9" rx="1" fill="#032e24"/><rect x="155.71" y="46.6" width="2.4" height="15.9" rx="1" fill="#032e24"/><rect x="159.84" y="46.6" width="2.4" height="15.9" rx="1" fill="#032e24"/><rect x="163.97" y="46.6" width="2.4" height="15.9" rx="1" fill="#032e24"/><rect x="168.10" y="46.6" width="2.4" height="15.9" rx="1" fill="#032e24"/><rect x="172.23" y="46.6" width="2.4" height="15.9" rx="1" fill="#032e24"/><rect x="176.36" y="46.6" width="2.4" height="15.9" rx="1" fill="#032e24"/><rect x="180.49" y="46.6" width="2.4" height="15.9" rx="1" fill="#032e24"/><rect x="184.62" y="46.6" width="2.4" height="15.9" rx="1" fill="#032e24"/>
<rect x="0" y="66.6" width="1458" height="1.6" fill="#7a7a7a"/>
<path d="M0.0 63.2 C0.3 63.7 -2.1 64.8 1.4 65.3 C4.9 65.8 11.2 65.8 15.0 65.3 C18.8 64.8 16.7 63.2 17.8 63.2 C18.9 63.2 18.1 64.8 19.9 65.3 C21.7 65.8 23.6 65.8 25.4 65.3 C27.1 64.8 26.6 63.2 27.4 63.2 C28.2 63.2 28.0 65.6 29.0 65.3 C30.0 65.0 30.4 61.8 31.5 61.8 C32.6 61.8 28.8 64.5 33.6 65.3 C38.4 66.1 46.7 65.6 52.0 65.3 C57.3 65.0 54.8 63.9 56.2 63.9 C57.6 63.9 56.1 66.0 58.0 65.3 C59.9 64.6 62.5 61.1 64.5 61.1 C66.5 61.1 65.6 64.7 66.5 65.3 C67.4 65.9 67.5 63.5 68.5 63.5 C69.5 63.5 68.6 64.9 71.0 65.3 C73.4 65.7 75.9 68.8 78.9 65.3 C81.9 61.8 81.6 52.8 83.7 50.2 C85.8 47.6 85.6 53.0 87.8 54.3 C90.0 55.6 90.9 53.1 93.3 55.7 C95.7 58.3 96.1 64.3 98.0 65.3 C99.9 66.3 100.1 59.8 101.5 59.8 C102.9 59.8 101.6 65.8 104.2 65.3 C106.8 64.8 109.6 57.7 112.5 57.7 C115.4 57.7 114.7 65.1 116.6 65.3 C118.5 65.5 119.0 58.9 120.7 58.4 C122.5 57.9 121.5 62.1 124.1 63.2 C126.7 64.3 127.1 64.5 131.7 63.2 C136.3 61.9 139.5 57.0 144.0 57.7 C148.5 58.4 148.0 64.7 150.9 66.0 C153.8 67.3 153.5 65.3 156.4 63.2 C159.3 61.1 159.7 56.3 163.2 57.0 C166.7 57.7 168.0 65.8 171.5 66.0 C175.0 66.2 175.8 57.7 178.3 57.7 C180.8 57.7 179.8 65.7 182.4 66.0 C185.0 66.3 186.7 59.6 189.3 59.1 C191.9 58.6 190.9 64.6 193.4 63.9 C195.9 63.2 197.0 56.7 200.0 56.3 C203.0 55.9 203.3 62.1 206.2 62.1 C209.1 62.2 210.0 56.0 212.4 56.5 C214.8 57.1 214.6 64.9 216.5 64.5 C218.5 64.2 218.7 54.7 220.7 54.9 C222.6 55.2 222.9 65.1 224.8 65.7 C226.7 66.2 226.5 57.4 228.9 57.2 C231.3 57.0 232.7 64.8 235.1 64.8 C237.5 64.9 237.3 57.6 239.2 57.3 C241.2 57.0 241.5 63.6 243.4 63.6 C245.3 63.5 245.6 56.7 247.5 57.2 C249.4 57.7 249.7 65.5 251.6 65.5 C253.6 65.6 253.8 57.8 255.8 57.4 C257.7 57.0 258.0 63.8 259.9 63.8 C261.8 63.9 262.1 57.9 264.0 57.7 C266.0 57.5 266.2 63.4 268.2 63.1 C270.1 62.8 269.9 56.3 272.3 56.3 C274.7 56.3 276.1 63.2 278.5 63.1 C280.9 62.9 280.7 54.8 282.6 55.5 C284.5 56.1 284.3 65.7 286.7 65.9 C289.2 66.2 290.5 57.6 292.9 56.4 C295.4 55.2 295.2 60.8 297.1 60.7 C299.0 60.6 299.5 57.0 301.2 55.9 C302.9 54.8 302.5 54.0 304.2 56.1 C305.9 58.3 306.4 65.4 308.3 65.1 C310.3 64.8 310.5 55.1 312.5 54.8 C314.4 54.4 314.7 62.6 316.6 63.6 C318.5 64.5 318.3 59.0 320.7 58.9 C323.1 58.9 324.0 63.3 326.9 63.3 C329.8 63.4 331.0 59.6 333.1 59.0 C335.3 58.3 334.5 60.3 336.1 60.5 C337.8 60.8 338.3 61.0 340.3 60.0 C342.2 59.1 342.5 55.5 344.4 56.3 C346.3 57.1 346.1 63.6 348.5 63.4 C350.9 63.3 352.3 56.2 354.7 55.7 C357.1 55.1 356.9 61.1 358.8 61.0 C360.8 60.8 361.1 54.2 363.0 54.9 C364.9 55.6 364.7 64.1 367.1 64.1 C369.5 64.1 370.9 55.9 373.3 55.1 C375.7 54.2 375.5 60.3 377.4 60.5 C379.4 60.6 379.6 55.2 381.6 55.9 C383.5 56.6 383.8 63.1 385.7 63.5 C387.6 63.9 387.4 57.4 389.8 57.6 C392.2 57.8 393.6 64.9 396.0 64.3 C398.4 63.7 398.2 54.8 400.2 55.0 C402.1 55.2 402.4 64.8 404.3 65.1 C406.2 65.4 406.0 56.8 408.4 56.4 C410.8 56.0 412.2 63.8 414.6 63.5 C417.0 63.2 416.8 54.5 418.7 55.1 C420.7 55.6 421.0 65.1 422.9 65.8 C424.8 66.4 425.3 59.7 427.0 57.9 C428.7 56.1 428.3 56.8 430.0 58.1 C431.7 59.4 432.2 63.8 434.1 63.5 C436.1 63.2 436.3 56.4 438.3 56.9 C440.2 57.4 440.5 65.5 442.4 65.7 C444.3 65.8 444.6 57.4 446.5 57.5 C448.5 57.5 448.2 65.5 450.7 65.8 C453.1 66.0 454.4 58.8 456.9 58.6 C459.3 58.4 458.6 65.8 461.0 64.9 C463.4 64.0 464.8 55.9 467.2 54.8 C469.6 53.7 469.4 59.5 471.3 60.2 C473.2 60.9 473.5 57.3 475.4 57.8 C477.4 58.3 477.7 63.0 479.6 62.3 C481.5 61.6 481.8 55.2 483.7 54.9 C485.6 54.6 485.9 60.2 487.8 61.0 C489.8 61.9 489.6 57.9 492.0 58.4 C494.4 58.9 495.8 63.9 498.2 63.0 C500.6 62.2 500.4 55.1 502.3 54.9 C504.2 54.6 504.0 60.9 506.4 61.8 C508.8 62.7 509.7 57.8 512.6 58.7 C515.5 59.6 516.4 66.0 518.8 65.5 C521.2 65.1 521.0 57.1 523.0 56.8 C524.9 56.6 525.2 64.0 527.1 64.4 C529.0 64.9 529.6 59.8 531.2 58.8 C532.9 57.8 532.1 59.2 534.2 60.1 C536.4 61.1 538.0 64.2 540.4 63.0 C542.8 61.9 542.6 55.7 544.5 55.1 C546.5 54.6 546.3 60.5 548.7 60.9 C551.1 61.2 552.0 56.1 554.9 56.7 C557.8 57.4 558.2 63.3 561.1 63.6 C564.0 63.9 564.9 58.7 567.3 58.1 C569.7 57.5 569.5 61.6 571.4 61.0 C573.3 60.3 573.9 56.7 575.5 55.4 C577.2 54.2 576.9 53.1 578.5 55.5 C580.2 57.9 580.7 65.2 582.7 65.9 C584.6 66.5 585.1 59.9 586.8 58.2 C588.5 56.5 588.1 58.0 589.8 58.6 C591.5 59.3 591.5 61.2 593.9 61.0 C596.3 60.7 597.2 56.5 600.1 57.5 C603.0 58.6 603.9 65.3 606.3 65.5 C608.7 65.7 608.8 59.8 610.5 58.4 C612.1 57.0 611.8 57.9 613.5 59.6 C615.1 61.2 615.7 65.9 617.6 65.4 C619.5 64.9 619.8 57.4 621.7 57.4 C623.6 57.4 623.9 65.3 625.8 65.5 C627.8 65.6 628.1 58.1 630.0 58.0 C631.9 57.9 632.2 64.7 634.1 64.9 C636.0 65.1 636.3 59.8 638.2 58.8 C640.2 57.8 640.4 60.9 642.4 60.6 C644.3 60.4 644.6 57.2 646.5 57.9 C648.4 58.6 648.7 64.0 650.6 63.8 C652.6 63.6 652.8 56.6 654.8 56.9 C656.7 57.3 657.0 65.9 658.9 65.4 C660.8 64.9 660.6 55.1 663.0 54.9 C665.4 54.7 666.8 64.1 669.2 64.4 C671.6 64.7 671.4 56.1 673.3 56.2 C675.3 56.3 675.6 65.2 677.5 65.0 C679.4 64.7 679.7 54.8 681.6 54.9 C683.5 55.1 683.8 64.8 685.7 65.7 C687.7 66.6 687.9 59.0 689.9 58.9 C691.8 58.8 692.1 65.8 694.0 65.2 C695.9 64.5 696.5 58.1 698.1 56.1 C699.8 54.0 699.0 55.2 701.1 56.4 C703.3 57.6 704.9 61.4 707.3 61.2 C709.7 61.0 709.0 55.7 711.5 55.5 C713.9 55.3 715.2 59.9 717.7 60.4 C720.1 60.9 719.4 56.6 721.8 57.6 C724.2 58.6 725.1 64.3 728.0 64.5 C730.9 64.8 731.8 59.6 734.2 58.8 C736.6 58.0 736.4 61.2 738.3 61.1 C740.2 61.0 740.5 57.2 742.5 58.2 C744.4 59.3 744.7 66.1 746.6 65.5 C748.5 65.0 748.8 56.4 750.7 55.9 C752.6 55.4 752.9 63.1 754.8 63.4 C756.8 63.7 757.0 56.8 759.0 57.1 C760.9 57.4 761.2 64.9 763.1 64.8 C765.0 64.8 765.6 58.4 767.2 56.9 C768.9 55.5 768.6 56.8 770.2 58.7 C771.9 60.6 772.4 65.1 774.4 65.1 C776.3 65.1 776.1 58.8 778.5 58.7 C780.9 58.5 782.3 65.0 784.7 64.4 C787.1 63.8 786.4 56.3 788.8 56.0 C791.2 55.8 792.1 63.0 795.0 63.3 C797.9 63.6 798.8 56.7 801.2 57.3 C803.6 57.9 803.4 66.4 805.4 65.9 C807.3 65.5 807.6 55.8 809.5 55.4 C811.4 54.9 811.2 64.2 813.6 64.1 C816.0 64.0 817.4 55.6 819.8 55.0 C822.2 54.4 822.0 60.9 823.9 61.6 C825.9 62.2 826.1 57.0 828.1 57.7 C830.0 58.3 830.3 64.4 832.2 64.2 C834.1 64.1 834.4 56.6 836.3 56.9 C838.3 57.2 838.5 65.9 840.5 65.6 C842.4 65.2 842.7 56.7 844.6 55.5 C846.5 54.4 846.8 60.1 848.7 60.8 C850.6 61.5 850.9 58.6 852.9 58.5 C854.8 58.4 855.1 61.1 857.0 60.3 C858.9 59.5 859.4 56.3 861.1 55.1 C862.8 53.9 862.0 53.9 864.1 55.3 C866.3 56.7 867.9 61.0 870.3 61.1 C872.7 61.1 872.5 54.5 874.4 55.4 C876.4 56.3 876.6 64.0 878.6 64.7 C880.5 65.5 880.8 58.6 882.7 58.6 C884.6 58.6 884.9 65.3 886.8 64.9 C888.8 64.5 889.0 57.6 891.0 56.8 C892.9 55.9 893.2 61.7 895.1 61.2 C897.0 60.7 896.8 54.1 899.2 54.7 C901.6 55.2 903.0 63.4 905.4 63.6 C907.8 63.7 907.6 56.0 909.6 55.3 C911.5 54.5 911.8 60.3 913.7 60.2 C915.6 60.2 915.9 55.0 917.8 55.1 C919.7 55.2 919.5 60.5 921.9 60.8 C924.4 61.1 925.7 55.9 928.1 56.4 C930.6 56.9 930.3 62.6 932.3 63.0 C934.2 63.5 934.0 58.0 936.4 58.3 C938.8 58.5 940.2 64.4 942.6 64.1 C945.0 63.9 945.1 58.5 946.7 57.2 C948.4 55.9 948.1 57.5 949.7 58.6 C951.4 59.7 951.4 62.4 953.9 62.0 C956.3 61.6 957.6 57.4 960.1 57.1 C962.5 56.7 962.3 60.5 964.2 60.6 C966.1 60.8 965.9 57.1 968.3 57.8 C970.7 58.6 972.1 64.0 974.5 64.0 C976.9 64.0 976.2 58.1 978.7 58.0 C981.1 57.9 982.4 64.0 984.9 63.6 C987.3 63.1 987.3 57.3 989.0 55.9 C990.6 54.4 990.3 55.2 992.0 57.5 C993.6 59.8 994.2 66.2 996.1 65.8 C998.0 65.5 998.3 56.4 1000.2 56.0 C1002.2 55.6 1002.0 63.8 1004.4 64.2 C1006.8 64.5 1007.7 58.3 1010.6 57.4 C1013.5 56.4 1014.4 60.0 1016.8 60.1 C1019.2 60.2 1018.5 56.6 1020.9 57.8 C1023.3 59.0 1024.2 66.0 1027.1 65.3 C1030.0 64.5 1030.9 55.5 1033.3 54.5 C1035.7 53.6 1035.0 60.4 1037.4 61.4 C1039.8 62.4 1041.2 57.9 1043.6 58.9 C1046.0 59.8 1046.3 64.9 1047.8 65.4 C1049.2 65.9 1048.2 62.0 1050.0 61.0 C1051.8 60.0 1053.6 61.4 1055.6 61.0 C1057.6 60.6 1057.2 59.2 1058.6 59.2 C1060.0 59.2 1055.4 60.6 1061.6 61.0 C1067.8 61.4 1078.8 61.4 1085.0 61.0 C1091.2 60.6 1086.6 59.2 1088.0 59.2 C1089.4 59.2 1084.0 60.6 1091.0 61.0 C1098.0 61.4 1111.0 61.4 1118.0 61.0 C1125.0 60.6 1119.6 59.2 1121.0 59.2 C1122.4 59.2 1117.2 60.6 1124.0 61.0 C1130.8 61.4 1143.2 61.4 1150.0 61.0 C1156.8 60.6 1151.6 59.2 1153.0 59.2 C1154.4 59.2 1149.0 60.6 1156.0 61.0 C1163.0 61.4 1176.0 61.4 1183.0 61.0 C1190.0 60.6 1184.6 59.2 1186.0 59.2 C1187.4 59.2 1182.5 60.6 1189.0 61.0 C1195.5 61.4 1207.5 61.4 1214.0 61.0 C1220.5 60.6 1215.6 59.2 1217.0 59.2 C1218.4 59.2 1213.2 60.6 1220.0 61.0 C1226.8 61.4 1239.2 61.4 1246.0 61.0 C1252.8 60.6 1247.6 59.2 1249.0 59.2 C1250.4 59.2 1244.8 60.6 1252.0 61.0 C1259.2 61.4 1272.8 61.4 1280.0 61.0 C1287.2 60.6 1281.6 59.2 1283.0 59.2 C1284.4 59.2 1279.7 60.6 1286.0 61.0 C1292.3 61.4 1303.7 61.4 1310.0 61.0 C1316.3 60.6 1311.6 59.2 1313.0 59.2 C1314.4 59.2 1310.2 60.6 1316.0 61.0 C1321.8 61.4 1332.2 63.3 1338.0 61.0 C1343.8 58.7 1339.1 53.4 1341.0 51.0 C1342.9 48.6 1344.1 49.7 1346.0 50.6 C1347.9 51.5 1347.8 52.6 1349.0 55.0 C1350.2 57.4 1349.6 59.1 1351.0 61.0 C1352.4 62.9 1353.1 63.9 1355.0 63.2 C1356.9 62.5 1357.2 58.0 1359.1 58.2 C1361.1 58.3 1361.3 64.0 1363.3 63.9 C1365.2 63.7 1365.5 57.2 1367.4 57.5 C1369.3 57.9 1369.6 65.5 1371.5 65.5 C1373.4 65.5 1373.2 58.1 1375.7 57.7 C1378.1 57.4 1379.0 63.8 1381.9 64.0 C1384.7 64.1 1385.2 58.3 1388.1 58.4 C1390.9 58.5 1391.4 64.3 1394.3 64.4 C1397.1 64.4 1397.6 58.5 1400.5 58.6 C1403.3 58.7 1403.8 65.4 1406.7 64.8 C1409.5 64.2 1410.4 56.2 1412.9 56.1 C1415.3 56.0 1415.1 64.2 1417.0 64.6 C1418.9 64.9 1418.7 58.1 1421.1 57.6 C1423.5 57.2 1424.4 62.4 1427.3 62.7 C1430.2 63.0 1431.1 58.6 1433.5 59.0 C1435.9 59.4 1435.2 65.2 1437.6 64.5 C1440.1 63.9 1441.4 56.4 1443.8 56.3 C1446.3 56.2 1445.6 63.8 1448.0 64.0 C1450.4 64.2 1451.8 57.3 1454.2 57.0 C1456.6 56.7 1456.4 62.0 1458.3 62.7 C1460.2 63.3 1461.5 60.4 1462.4 59.7" stroke="#14ee4c" stroke-width="2.3" fill="none" stroke-linejoin="round" stroke-linecap="round"/>
<rect x="0" y="112.2" width="1458" height="2" fill="#3a3aff"/>
<path d="M57.5 113 L57.5 110.0 M149.0 113 L149.0 110.0 M195.0 113 L195.0 97.5 M250.0 113 L250.0 110.0 M336.0 113 L336.0 110.0 M436.0 113 L436.0 107.0 M487.5 113 L487.5 110.5 M561.0 113 L561.0 110.5 M648.5 113 L648.5 110.5 M702.5 113 L702.5 110.5 M791.5 113 L791.5 110.5 M854.0 113 L854.0 108.0 M911.5 113 L911.5 110.5 M1348.5 113 L1348.5 108.4 M1363.0 113 L1363.0 110.8 M1379.3 113 L1379.3 100.3 M1392.0 113 L1392.0 112.0 M1410.8 113 L1410.8 100.3 M1436.0 113 L1436.0 100.3 M1448.0 113 L1448.0 110.8 " stroke="#3a3aff" stroke-width="1.8" fill="none"/>
</svg>
</body></html>
